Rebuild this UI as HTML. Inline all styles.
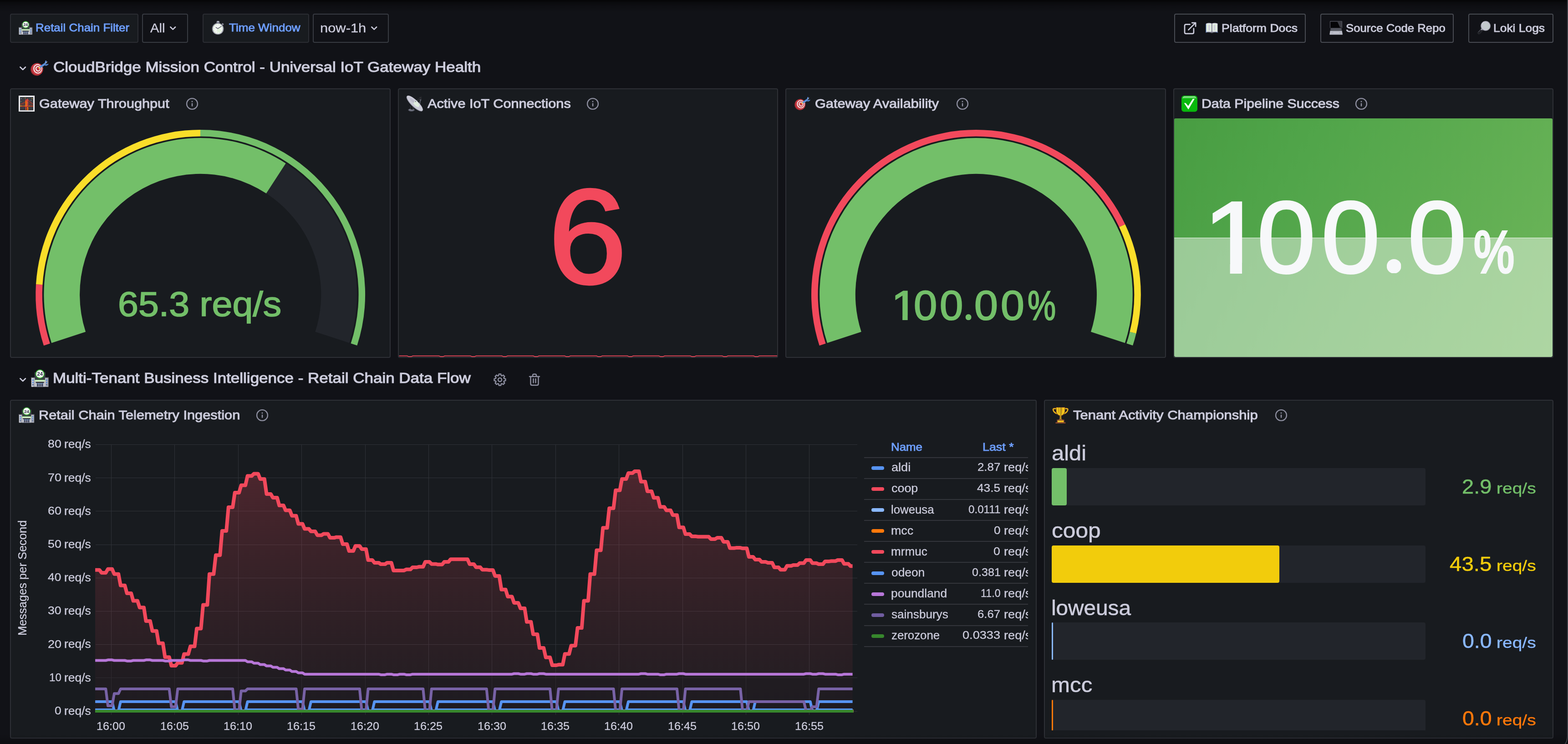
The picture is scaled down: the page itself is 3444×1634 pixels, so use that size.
<!DOCTYPE html><html lang="en"><head><meta charset="utf-8"><title>CloudBridge Mission Control</title><style>
*{box-sizing:border-box}
html,body{margin:0;padding:0;background:#111217;}
body{width:3444px;height:1634px;overflow:hidden;position:relative;font-family:"Liberation Sans",sans-serif;color:#ccccdc;}
#app{will-change:transform;position:absolute;left:0;top:0;width:3444px;height:1634px;overflow:hidden;background:#111217;}
.t{position:absolute;white-space:nowrap;transform-origin:0 50%;display:block;margin:0;padding:0;}
.abs{position:absolute}
.panel{position:absolute;background:#181b1f;border:2px solid #2e3036;border-radius:4px;}
.chip{position:absolute;top:30px;height:64px;border-radius:4px;}
.chip.lbl{background:#181b1f;border:2px solid #2b2d33;}
.chip.val{background:#111217;border:2px solid #383b42;}
.chip.lnk{background:#111217;border:2px solid #484b52;}
svg{position:absolute;overflow:visible}
@media (max-width:1722px) and (min-resolution:2dppx){body{zoom:0.5}}
</style></head><body><div id="app"><nav class="controls"><div class="chip lbl" style="left:22px;width:282px"></div><svg class="emoji" role="img" aria-label="convenience store" style="left:41.2px;top:45.6px" width="30.3" height="30.3" viewBox="0 0 39 39"><rect x="7.7" y="6.6" width="24" height="17" fill="#3b3e47"/><rect x="0.6" y="18.6" width="7.9" height="20" fill="#b4b6c0"/><rect x="30.9" y="18.6" width="7.5" height="20" fill="#b4b6c0"/><rect x="1.6" y="18.6" width="3" height="20" fill="#cfd0d7"/><rect x="35" y="18.6" width="3" height="20" fill="#a2a4ae"/><rect x="-0.2" y="17.6" width="9" height="1.5" fill="#5a5e69"/><rect x="30.4" y="17.6" width="8.6" height="1.5" fill="#5a5e69"/><rect x="3.1" y="22.4" width="2.7" height="3" fill="#4a86d8"/><rect x="3.1" y="27.6" width="2.7" height="3" fill="#4a86d8"/><rect x="3.1" y="32.6" width="2.7" height="2.8" fill="#45608f"/><rect x="33.3" y="22.4" width="2.5" height="3" fill="#4a86d8"/><rect x="33.3" y="27.6" width="2.5" height="3" fill="#4a86d8"/><rect x="33.3" y="32.6" width="2.5" height="2.8" fill="#45608f"/><rect x="8.4" y="23.3" width="22.5" height="4.3" fill="#d6f0cb"/><rect x="8.4" y="22.7" width="22.5" height="0.8" fill="#3aa635"/><rect x="8.4" y="27.6" width="22.5" height="11" fill="#c6c8d0"/><rect x="10.8" y="27.5" width="17.8" height="2.8" fill="#33363f"/><rect x="12.8" y="30.3" width="14" height="8.3" fill="#4b5066"/><rect x="13.4" y="31" width="3.6" height="1.2" fill="#4a86d8"/><rect x="18.3" y="31" width="3.2" height="1.2" fill="#4a86d8"/><rect x="22.8" y="31" width="3.4" height="1.2" fill="#4a86d8"/><rect x="17.1" y="30.3" width="1" height="8.3" fill="#b9bbc4"/><rect x="21.6" y="30.3" width="1" height="8.3" fill="#b9bbc4"/><rect x="8" y="37.8" width="23" height="1" fill="#8d93a6"/><circle cx="19.7" cy="10.4" r="10.1" fill="#36a632"/><circle cx="19.7" cy="10.4" r="8.3" fill="#f6f7f8"/><path d="M12.6 15.6 Q19.7 21 26.8 15.6 Q19.7 17.6 12.6 15.6Z" fill="#d6f0cb"/><text x="19.75" y="14.4" font-family="Liberation Sans,sans-serif" font-weight="700" font-size="11" text-anchor="middle" fill="#2d3142" textLength="12.6" lengthAdjust="spacingAndGlyphs">24</text></svg><span class="t" style="left:78.4px;top:48.6px;font-size:24.5px;line-height:24.5px;color:#6e9fff;transform:scaleX(1.0582);-webkit-text-stroke:0.88px #6e9fff;">Retail Chain Filter</span><div class="chip val" style="left:312px;width:101px"></div><span class="t" style="left:330.2px;top:48.0px;font-size:28px;line-height:28px;color:#ccccdc;transform:scaleX(1.0437);-webkit-text-stroke:0.34px #ccccdc;">All</span><svg style="left:373.3px;top:58.0px" width="13.5" height="8.4" viewBox="0 0 13.5 8.4"><path d="M1.30 1.30 L6.75 6.58 L12.20 1.30" fill="none" stroke="#ccccdc" stroke-width="2.6" stroke-linecap="round" stroke-linejoin="round"/></svg><div class="chip lbl" style="left:445px;width:234px"></div><svg class="emoji" role="img" aria-label="stopwatch" style="left:465.0px;top:45.0px" width="28.0" height="32.0" viewBox="0 0 28 32"><rect x="10.6" y="1" width="6.6" height="5.4" rx="1.6" fill="#7d8090"/><ellipse cx="13.9" cy="2.2" rx="2" ry="1.1" fill="#c9cad3"/><rect x="22.3" y="6.3" width="4" height="3.2" rx="0.9" transform="rotate(40 24.3 7.9)" fill="#8d8f9c"/><circle cx="13.6" cy="18.2" r="12.9" fill="#8b8d99"/><path d="M1.2 21 A12.9 12.9 0 0 0 26 21 A13.5 11 0 0 1 1.2 21Z" fill="#b3b5bf"/><circle cx="13.6" cy="18" r="10.9" fill="#f3f5f4"/><circle cx="13.6" cy="18" r="9" fill="none" stroke="#d5efca" stroke-width="2.6" stroke-dasharray="1.5 3.2"/><circle cx="15.5" cy="21.5" r="4.2" fill="#d5efca" opacity="0.6"/><path d="M9.2 15.1 L13.5 17.9 L21 12.9" stroke="#5a5c6a" stroke-width="1.3" stroke-linecap="round" stroke-linejoin="round" fill="none"/></svg><span class="t" style="left:502.5px;top:48.6px;font-size:24.5px;line-height:24.5px;color:#6e9fff;transform:scaleX(1.0623);-webkit-text-stroke:0.88px #6e9fff;">Time Window</span><div class="chip val" style="left:687px;width:167px"></div><span class="t" style="left:703.3px;top:48.0px;font-size:28px;line-height:28px;color:#ccccdc;transform:scaleX(1.1026);-webkit-text-stroke:0.34px #ccccdc;">now-1h</span><svg style="left:815.0px;top:58.0px" width="13.5" height="8.4" viewBox="0 0 13.5 8.4"><path d="M1.30 1.30 L6.75 6.58 L12.20 1.30" fill="none" stroke="#ccccdc" stroke-width="2.6" stroke-linecap="round" stroke-linejoin="round"/></svg><div class="chip lnk" style="left:2579px;width:289px"></div><svg class="ico" role="img" aria-label="external link" style="left:2600.0px;top:48.0px" width="28.0" height="28.0" viewBox="0 0 28 28"><path d="M13.6 5.7 H5 Q2 5.7 2 8.7 V22.9 Q2 25.9 5 25.9 H18.9 Q21.9 25.9 21.9 22.9 V14.6" fill="none" stroke="#ccccdc" stroke-width="2.7" stroke-linecap="round" stroke-linejoin="round"/><path d="M10.4 17.6 L25.6 2.4 M18.2 2.1 H26.1 V10" fill="none" stroke="#ccccdc" stroke-width="2.7" stroke-linecap="round" stroke-linejoin="round"/></svg><svg class="emoji" role="img" aria-label="open book" style="left:2647.7px;top:49.6px" width="27.4" height="22.6" viewBox="0 0 27.4 22.6"><path d="M0.4 2.6 L1.6 2 V20.4 L0.4 21 Z" fill="#4a86d8"/><path d="M1.2 1.8 Q7 -0.4 13.4 1.4 V20.8 Q7 19 1.2 20.2 Z" fill="#dcdde7"/><path d="M26.4 1.8 Q20.6 -0.4 14.2 1.4 V20.8 Q20.6 19 26.4 20.2 Z" fill="#dcdde7"/><path d="M3 3.4 Q8 2 12 3.2 V18.6 Q8 17.4 3 18.4 Z" fill="#e2f4dc" opacity="0.9"/><path d="M24.6 3.4 Q19.6 2 15.6 3.2 V18.6 Q19.6 17.4 24.6 18.4 Z" fill="#e2f4dc" opacity="0.9"/><path d="M6 5 Q8 4.4 9.8 5 V17 Q8 16.4 6 17 Z" fill="#cfcfdc"/><path d="M17.6 5 Q19.6 4.4 21.6 5 V17 Q19.6 16.4 17.6 17 Z" fill="#cfcfdc"/><path d="M13.8 1.4 V21.2" stroke="#7d7f8c" stroke-width="1.1"/><path d="M0.4 20.6 Q7 19.4 12.6 21 Q13.8 22.4 15 21 Q20.6 19.4 27.2 20.6 V21.4 Q20.6 20.4 15.4 22 Q13.8 23.2 12.2 22 Q7 20.4 0.4 21.4 Z" fill="#8f93a6"/><path d="M0.4 20.7 H4 V21.3 H0.4Z M22.6 20.6 H26.8 V21.2 H22.6Z" fill="#4a86d8"/></svg><span class="t" style="left:2682.6px;top:49.9px;font-size:24px;line-height:24px;color:#ccccdc;transform:scaleX(1.1081);-webkit-text-stroke:0.86px #ccccdc;">Platform Docs</span><div class="chip lnk" style="left:2900px;width:293px"></div><svg class="emoji" role="img" aria-label="laptop" style="left:2919.7px;top:45.7px" width="29.3" height="30.5" viewBox="0 0 29.3 30.5"><path d="M2 0.3 H27 Q28 0.3 28 1.3 V15.4 H1.1 V1.3 Q1.1 0.3 2 0.3Z" fill="#5d5f69"/><rect x="2.1" y="1.5" width="24.8" height="13.9" fill="#050507"/><path d="M17.4 1.5 H26.9 V14 L23.4 14.6 Z" fill="#3b3c43"/><path d="M2.6 15.4 H26.5 L27.6 21.8 H1.5 Z" fill="#494b53"/><path d="M4.6 17 H24.5 M4.2 18.6 H25 M5 20.2 H24.6" stroke="#6a6d78" stroke-width="0.8" stroke-dasharray="1.6 0.9"/><path d="M1.5 21.8 H27.6 L29 29.4 Q29 30.2 28 30.2 H1.2 Q0.3 30.2 0.3 29.4 Z" fill="#b8bac6"/><rect x="7.4" y="23.4" width="14.6" height="4.8" rx="0.5" fill="#c8cad5" stroke="#9d9fac" stroke-width="0.6"/><path d="M8.6 25 H21 M8.6 26.6 H21" stroke="#a9abb8" stroke-width="0.6" stroke-dasharray="1.5 0.8"/></svg><span class="t" style="left:2956.3px;top:49.9px;font-size:24px;line-height:24px;color:#ccccdc;transform:scaleX(1.0717);-webkit-text-stroke:0.86px #ccccdc;">Source Code Repo</span><div class="chip lnk" style="left:3225px;width:187px"></div><svg class="emoji" role="img" aria-label="magnifying glass" style="left:3244.1px;top:46.0px" width="30.0" height="30.0" viewBox="0 0 30 30"><path d="M11.2 18.8 L4.6 26" stroke="#3d3f47" stroke-width="6" stroke-linecap="round"/><path d="M11.2 18.8 L4.6 26" stroke="#1d1e23" stroke-width="5" stroke-linecap="round"/><path d="M9.4 17.8 L3.6 24.2" stroke="#4c4e58" stroke-width="1.2" stroke-linecap="round"/><path d="M12.6 16.2 L9.6 19.6" stroke="#a9abb7" stroke-width="3.4"/><circle cx="19.1" cy="10.9" r="10.9" fill="#8b8d98"/><circle cx="19.1" cy="10.9" r="9.8" fill="#c4c5d0"/><path d="M10.4 8 A9.3 9.3 0 0 1 16 2.2" stroke="#e4e5ec" stroke-width="1" fill="none"/><g fill="#b9ecae"><circle cx="13" cy="6.6" r="0.55"/><circle cx="17.4" cy="5.6" r="0.55"/><circle cx="20.4" cy="5.6" r="0.55"/><circle cx="23.4" cy="6.6" r="0.55"/><circle cx="16.4" cy="7.6" r="0.55"/><circle cx="19.4" cy="8.6" r="0.55"/><circle cx="22.4" cy="8.6" r="0.55"/><circle cx="25.4" cy="9.6" r="0.55"/><circle cx="15.4" cy="10.6" r="0.55"/><circle cx="17.4" cy="10.6" r="0.55"/><circle cx="20.4" cy="11.6" r="0.55"/><circle cx="22.4" cy="12.6" r="0.55"/><circle cx="24.4" cy="12.6" r="0.55"/><circle cx="26.4" cy="11.6" r="0.55"/><circle cx="14.4" cy="13.6" r="0.55"/><circle cx="18.4" cy="13.6" r="0.55"/><circle cx="15.4" cy="15.6" r="0.55"/><circle cx="20.4" cy="15.6" r="0.55"/><circle cx="24.4" cy="16.6" r="0.55"/><circle cx="25.4" cy="14.6" r="0.55"/><circle cx="22.4" cy="17.6" r="0.55"/></g></svg><span class="t" style="left:3280.4px;top:49.9px;font-size:24px;line-height:24px;color:#ccccdc;transform:scaleX(1.1006);-webkit-text-stroke:0.86px #ccccdc;">Loki Logs</span></nav><header class="row"><svg style="left:43.0px;top:145.6px" width="14.3" height="8.8" viewBox="0 0 14.3 8.8"><path d="M1.30 1.30 L7.15 6.98 L13.00 1.30" fill="none" stroke="#ccccdc" stroke-width="2.6" stroke-linecap="round" stroke-linejoin="round"/></svg><svg class="emoji" role="img" aria-label="direct hit" style="left:67.1px;top:131.6px" width="40.0" height="35.0" viewBox="0 0 40 35"><ellipse cx="13.6" cy="20.6" rx="13.4" ry="13.6" transform="rotate(-20 13.6 20.6)" fill="#9c2b30"/><ellipse cx="15" cy="19.6" rx="12.6" ry="13.2" transform="rotate(-20 15 19.6)" fill="#c73a42"/><ellipse cx="15.8" cy="19.2" rx="9.6" ry="10.4" transform="rotate(-20 15.8 19.2)" fill="#f4f1f2"/><ellipse cx="16.1" cy="19.1" rx="7.6" ry="8.4" transform="rotate(-20 16.1 19.1)" fill="#c73a42"/><ellipse cx="16.4" cy="19" rx="5.5" ry="6.2" transform="rotate(-20 16.4 19)" fill="#f4f1f2"/><ellipse cx="16.6" cy="19" rx="3.4" ry="4" transform="rotate(-20 16.6 19)" fill="#c73a42"/><path d="M18 17.6 L22.5 14" stroke="#f5d21f" stroke-width="1.7" stroke-linecap="round"/><path d="M23.2 14.6 L27.6 18" stroke="#c9cad3" stroke-width="0.9"/><path d="M22.6 14.4 L31.5 8.6" stroke="#5a8fd9" stroke-width="4.6" stroke-linecap="round"/><path d="M30 9.4 L33 0.8 L35 1.6 L35.4 6.6 Z" fill="#5a8fd9"/><path d="M30.5 9.6 L39.6 8 L38.8 10.6 L33.4 13 Z" fill="#4f80c8"/><path d="M33.6 6 L37.2 3.4" stroke="#d0d2da" stroke-width="1.1"/><circle cx="33.2" cy="8.6" r="1" fill="#5d6b7c"/></svg><span class="t" style="left:116.8px;top:130.6px;font-size:32px;line-height:32px;color:#ccccdc;transform:scaleX(1.0940);-webkit-text-stroke:1.15px #ccccdc;">CloudBridge Mission Control - Universal IoT Gateway Health</span></header><section class="panel" style="left:22px;top:194px;width:835.5px;height:592px" aria-label="Gateway Throughput"></section><svg class="emoji" role="img" aria-label="bridge at night" style="left:40.8px;top:209.9px" width="35.0" height="35.0" viewBox="0 0 35 35"><rect x="0" y="0" width="35" height="35" fill="#f4f4f8"/><rect x="2.9" y="3" width="29.2" height="29.2" fill="#3b3e43"/><rect x="2.9" y="24.6" width="29.2" height="7.6" fill="#34363b"/><path d="M3.4 26.2H13.5M3.4 28H12M5 30H13.5M22.5 26.2H31.6M23.5 28H31.6M22.5 30H30" stroke="#45484e" stroke-width="0.7"/><circle cx="14.4" cy="5.4" r="0.8" fill="#e6b91e"/><circle cx="29.5" cy="6.4" r="0.8" fill="#e6b91e"/><rect x="5" y="6" width="1.4" height="0.9" fill="#c9cad3"/><rect x="26.4" y="10.2" width="1.6" height="0.9" fill="#c9cad3"/><rect x="4.5" y="12.4" width="0.9" height="1.4" fill="#c9cad3"/><path d="M14.6 13.6 Q9 17.4 3 19.2 M21 9.4 Q26.5 15.4 32 18.6" stroke="#a3392b" stroke-width="1.5" fill="none"/><path d="M5 22.4V19.4M7.6 22.4V18.2M10.2 22.4V17M12.6 22.4V15.6M23 22.4V13M25.4 22.4V15M27.8 22.4V16.8M30 22.4V18.2" stroke="#8f3a2e" stroke-width="0.8"/><rect x="2.9" y="22.3" width="29.2" height="2.3" fill="#a3392b"/><path d="M3 22.5H7M8.2 22.5H9M11 22.5H12M13 22.5H14.6M22.6 22.5H23.6M24.4 22.5H25.4M29 22.5H30" stroke="#e6b91e" stroke-width="1"/><path d="M14.4 9.6 L15.8 7.2 L17 9 L19.4 5.8 L21.2 9 V24.6 H14.4 Z" fill="#c9373f"/><rect x="15.1" y="11.6" width="2.1" height="12.6" fill="#ff7f00"/><path d="M18.6 9.6L19.8 8.6M18.2 12L19.8 10.6M19.4 14V18M19 20L20 21.4M18.4 22L19.6 20.8" stroke="#d9a61e" stroke-width="0.8"/><rect x="14.8" y="24.8" width="2.6" height="6.6" fill="#c9373f"/><rect x="18.4" y="24.8" width="2.6" height="7.2" fill="#ff7f00"/><rect x="17.4" y="25" width="1" height="6" fill="#5a2a2c"/><rect x="15" y="29.4" width="1.2" height="1.4" fill="#ff9d1e"/><rect x="20.6" y="27.6" width="1" height="3.6" fill="#c9373f"/></svg><span class="t" style="left:86.1px;top:213.8px;font-size:28px;line-height:28px;color:#ccccdc;transform:scaleX(1.0945);-webkit-text-stroke:1.01px #ccccdc;">Gateway Throughput</span><svg class="ico-info" style="left:408.2px;top:213.9px" width="28" height="28" viewBox="0 0 28 28"><circle cx="14" cy="14" r="11.9" fill="none" stroke="#8e8fa0" stroke-width="2.4"/><rect x="12.8" y="12.4" width="2.5" height="7.4" rx="1.2" fill="#8e8fa0"/><circle cx="14" cy="9" r="1.5" fill="#8e8fa0"/></svg><section class="panel" style="left:873.5px;top:194px;width:835.5px;height:592px" aria-label="Active IoT Connections"></section><svg class="emoji" role="img" aria-label="satellite antenna" style="left:893.0px;top:209.9px" width="35.0" height="35.0" viewBox="0 0 35 35"><ellipse cx="10.6" cy="31.6" rx="7" ry="3.2" fill="#5c5f6b"/><ellipse cx="10.2" cy="31" rx="4.6" ry="1.6" fill="#7d8090"/><path d="M7 22 L8.5 30.6 L13.5 31 L16 27 Z" fill="#2b2d33"/><path d="M10.4 24 L12 30" stroke="#0b0c0e" stroke-width="1.4"/><path d="M21 12 L25.5 9.6 L31.5 9 L29.5 13.4 L29.2 19" stroke="#6f727f" stroke-width="1.4" fill="none"/><path d="M25.6 9.4 L31.6 3.8" stroke="#222428" stroke-width="4.4" stroke-linecap="round"/><path d="M28.6 3.6 L32.6 6.6" stroke="#3a3c42" stroke-width="1.1"/><ellipse cx="17.6" cy="17.4" rx="7.6" ry="23.6" transform="rotate(-46.5 17.6 17.4)" fill="#8f92a0"/><ellipse cx="18.2" cy="16.8" rx="7.1" ry="23.3" transform="rotate(-46.5 18.2 16.8)" fill="#cacad7"/><ellipse cx="21.6" cy="18.4" rx="4.4" ry="8" transform="rotate(-46.5 21.6 18.4)" fill="#e4f3e0" opacity="0.85"/><ellipse cx="12" cy="10.4" rx="2.6" ry="7" transform="rotate(-46.5 12 10.4)" fill="#bdbdcb"/><path d="M19.8 13 L14.8 17" stroke="#dff0da" stroke-width="0.9"/><circle cx="19.6" cy="13.2" r="0.9" fill="#4a4c55"/></svg><span class="t" style="left:938.8px;top:213.8px;font-size:28px;line-height:28px;color:#ccccdc;transform:scaleX(1.0950);-webkit-text-stroke:1.01px #ccccdc;">Active IoT Connections</span><svg class="ico-info" style="left:1288.0px;top:213.9px" width="28" height="28" viewBox="0 0 28 28"><circle cx="14" cy="14" r="11.9" fill="none" stroke="#8e8fa0" stroke-width="2.4"/><rect x="12.8" y="12.4" width="2.5" height="7.4" rx="1.2" fill="#8e8fa0"/><circle cx="14" cy="9" r="1.5" fill="#8e8fa0"/></svg><section class="panel" style="left:1725px;top:194px;width:835.5px;height:592px" aria-label="Gateway Availability"></section><svg class="emoji" role="img" aria-label="direct hit" style="left:1745.2px;top:211.6px" width="35.0" height="30.6" viewBox="0 0 40 35"><ellipse cx="13.6" cy="20.6" rx="13.4" ry="13.6" transform="rotate(-20 13.6 20.6)" fill="#9c2b30"/><ellipse cx="15" cy="19.6" rx="12.6" ry="13.2" transform="rotate(-20 15 19.6)" fill="#c73a42"/><ellipse cx="15.8" cy="19.2" rx="9.6" ry="10.4" transform="rotate(-20 15.8 19.2)" fill="#f4f1f2"/><ellipse cx="16.1" cy="19.1" rx="7.6" ry="8.4" transform="rotate(-20 16.1 19.1)" fill="#c73a42"/><ellipse cx="16.4" cy="19" rx="5.5" ry="6.2" transform="rotate(-20 16.4 19)" fill="#f4f1f2"/><ellipse cx="16.6" cy="19" rx="3.4" ry="4" transform="rotate(-20 16.6 19)" fill="#c73a42"/><path d="M18 17.6 L22.5 14" stroke="#f5d21f" stroke-width="1.7" stroke-linecap="round"/><path d="M23.2 14.6 L27.6 18" stroke="#c9cad3" stroke-width="0.9"/><path d="M22.6 14.4 L31.5 8.6" stroke="#5a8fd9" stroke-width="4.6" stroke-linecap="round"/><path d="M30 9.4 L33 0.8 L35 1.6 L35.4 6.6 Z" fill="#5a8fd9"/><path d="M30.5 9.6 L39.6 8 L38.8 10.6 L33.4 13 Z" fill="#4f80c8"/><path d="M33.6 6 L37.2 3.4" stroke="#d0d2da" stroke-width="1.1"/><circle cx="33.2" cy="8.6" r="1" fill="#5d6b7c"/></svg><span class="t" style="left:1789.6px;top:213.8px;font-size:28px;line-height:28px;color:#ccccdc;transform:scaleX(1.0947);-webkit-text-stroke:1.01px #ccccdc;">Gateway Availability</span><svg class="ico-info" style="left:2099.7px;top:213.9px" width="28" height="28" viewBox="0 0 28 28"><circle cx="14" cy="14" r="11.9" fill="none" stroke="#8e8fa0" stroke-width="2.4"/><rect x="12.8" y="12.4" width="2.5" height="7.4" rx="1.2" fill="#8e8fa0"/><circle cx="14" cy="9" r="1.5" fill="#8e8fa0"/></svg><section class="panel" style="left:2576.5px;top:194px;width:835.5px;height:592px" aria-label="Data Pipeline Success"></section><svg class="emoji" role="img" aria-label="check mark button" style="left:2594.6px;top:209.9px" width="35.0" height="35.4" viewBox="0 0 34.7 35.1"><rect x="0" y="0" width="34.7" height="35.1" rx="5.6" fill="#09b80d"/><path d="M2.4 5.8 Q3.2 1.8 7 1.6 H27.7 Q31.5 1.8 32.3 5.8 Q31 4.6 27.7 4.4 H7 Q3.7 4.6 2.4 5.8Z" fill="#bfeec0" opacity="0.75"/><path d="M1.6 6.6 Q4 3.6 7 3.6 H27.7 Q30.7 3.6 33.1 6.6 Q30.6 6 27.7 6 H7 Q4.1 6 1.6 6.6Z" fill="#5fd462" opacity="0.8"/><path d="M5.6 16.2 L9.3 16 L14.7 22.6 L24.6 7 L28.7 7 L15.1 30.2 Z" fill="#fbfbfd"/></svg><span class="t" style="left:2638.6px;top:213.8px;font-size:28px;line-height:28px;color:#ccccdc;transform:scaleX(1.0811);-webkit-text-stroke:1.01px #ccccdc;">Data Pipeline Success</span><svg class="ico-info" style="left:2975.9px;top:213.9px" width="28" height="28" viewBox="0 0 28 28"><circle cx="14" cy="14" r="11.9" fill="none" stroke="#8e8fa0" stroke-width="2.4"/><rect x="12.8" y="12.4" width="2.5" height="7.4" rx="1.2" fill="#8e8fa0"/><circle cx="14" cy="9" r="1.5" fill="#8e8fa0"/></svg><svg class="gauge" style="left:0;top:0" width="3444" height="800" viewBox="0 0 3444 800"><path d="M113.23 753.14 A343.8 343.8 0 1 1 767.17 753.14 L692.33 728.82 A265.1 265.1 0 1 0 188.07 728.82 Z" fill="#22252b"/><path d="M113.23 753.14 A343.8 343.8 0 0 1 627.69 358.72 L584.77 424.69 A265.1 265.1 0 0 0 188.07 728.82 Z" fill="#73bf69"/><path d="M96.07 758.91 A361.9 361.9 0 0 1 79.01 624.18 L93.49 625.09 A347.4 347.4 0 0 0 109.86 754.42 Z" fill="#f2495c"/><path d="M79.00 624.36 A361.9 361.9 0 0 1 440.20 285.00 L440.20 299.50 A347.4 347.4 0 0 0 93.47 625.26 Z" fill="#fade2a"/><path d="M440.02 285.00 A361.9 361.9 0 0 1 784.39 758.73 L770.60 754.25 A347.4 347.4 0 0 0 440.03 299.50 Z" fill="#73bf69"/></svg><span class="t" style="left:259.3px;top:629.5px;font-size:76px;line-height:76px;color:#73bf69;transform:scaleX(1.0626);-webkit-text-stroke:1.7px #73bf69;">65.3 req/s</span><svg class="gauge" style="left:0;top:0" width="3444" height="800" viewBox="0 0 3444 800"><path d="M1816.93 753.14 A343.8 343.8 0 1 1 2470.87 753.14 L2396.03 728.82 A265.1 265.1 0 1 0 1891.77 728.82 Z" fill="#22252b"/><path d="M1816.93 753.14 A343.8 343.8 0 1 1 2470.87 753.14 L2396.03 728.82 A265.1 265.1 0 1 0 1891.77 728.82 Z" fill="#73bf69"/><path d="M1799.77 758.91 A361.9 361.9 0 0 1 2471.36 492.81 L2458.24 498.98 A347.4 347.4 0 0 0 1813.56 754.42 Z" fill="#f2495c"/><path d="M2471.28 492.65 A361.9 361.9 0 0 1 2495.53 732.49 L2481.44 729.06 A347.4 347.4 0 0 0 2458.16 498.83 Z" fill="#fade2a"/><path d="M2495.58 732.31 A361.9 361.9 0 0 1 2488.09 758.73 L2474.30 754.25 A347.4 347.4 0 0 0 2481.49 728.89 Z" fill="#73bf69"/></svg><div class="num" style="position:absolute;left:0;top:0"><span class="t" style="left:1957.5px;top:625.9px;font-size:90px;line-height:90px;color:#73bf69;transform:scaleX(1.1264);-webkit-text-stroke:2.2px #73bf69;clip-path:polygon(0 0,0.6em 0,0.6em 0.75em,0.3517em 0.75em,0.3517em 1em,0.2383em 1em,0.2383em 0.75em,0 0.75em)">1</span><span class="t" style="left:2006.7px;top:625.9px;font-size:90px;line-height:90px;color:#73bf69;transform:scaleX(1.0241);-webkit-text-stroke:2.2px #73bf69;">0</span><span class="t" style="left:2063.7px;top:625.9px;font-size:90px;line-height:90px;color:#73bf69;transform:scaleX(1.0241);-webkit-text-stroke:2.2px #73bf69;">0</span><span class="t" style="left:2108.4px;top:598.8px;font-size:123.4px;line-height:123.4px;color:#73bf69;transform:scaleX(1.1146);clip-path:ellipse(0.0485em 0.054em at 0.139em 0.7925em)">.</span><span class="t" style="left:2140.4px;top:625.9px;font-size:90px;line-height:90px;color:#73bf69;transform:scaleX(1.0355);-webkit-text-stroke:2.2px #73bf69;">0</span><span class="t" style="left:2197.9px;top:625.9px;font-size:90px;line-height:90px;color:#73bf69;transform:scaleX(1.0355);-webkit-text-stroke:2.2px #73bf69;">0</span><span class="t" style="left:2257.3px;top:625.9px;font-size:90px;line-height:90px;color:#73bf69;transform:scaleX(0.7764);-webkit-text-stroke:2.2px #73bf69;">%</span></div><span class="t" style="left:1203.8px;top:372.3px;font-size:296px;line-height:296px;color:#f2495c;transform:scaleX(1.0506);-webkit-text-stroke:5px #f2495c;">6</span><svg class="spark" style="left:0;top:0" width="3444" height="800" viewBox="0 0 3444 800"><path d="M876.5 781.6 H894 L898 783.2 H903 L907 781.6 H964 L968 783.2 H973 L977 781.6 H1033 L1037 783.2 H1042 L1046 781.6 H1102 L1106 783.2 H1111 L1115 781.6 H1171 L1175 783.2 H1180 L1184 781.6 H1240 L1244 783.2 H1249 L1253 781.6 H1310 L1314 783.2 H1319 L1323 781.6 H1378 L1382 783.2 H1387 L1391 781.6 H1447 L1451 783.2 H1456 L1460 781.6 H1516 L1520 783.2 H1525 L1529 781.6 H1586 L1590 783.2 H1595 L1599 781.6 H1655 L1659 783.2 H1664 L1668 781.6 H1707" stroke="#f2495c" stroke-width="1.7" fill="none" stroke-linejoin="round"/></svg><div class="abs statbg" style="left:2578.5px;top:260px;width:831.5px;height:524px;border-radius:3px 3px 4px 4px;overflow:hidden;background:linear-gradient(120deg,#489d42 0%,#51a54a 30%,#6eb65a 100%)"><div class="abs" style="left:0;top:262px;width:100%;height:262px;background:rgba(255,255,255,0.44);border-top:1.5px solid rgba(255,255,255,0.8)"></div></div><div class="num" style="position:absolute;left:0;top:0"><span class="t" style="left:2642.0px;top:408.6px;font-size:225px;line-height:225px;color:#f7f8fa;transform:scaleX(1.0976);-webkit-text-stroke:4px #f7f8fa;clip-path:polygon(0 0,0.6em 0,0.6em 0.75em,0.3484em 0.75em,0.3484em 1em,0.2416em 1em,0.2416em 0.75em,0 0.75em)">1</span><span class="t" style="left:2761.4px;top:408.6px;font-size:225px;line-height:225px;color:#f7f8fa;transform:scaleX(1.0263);-webkit-text-stroke:4px #f7f8fa;">0</span><span class="t" style="left:2901.6px;top:408.6px;font-size:225px;line-height:225px;color:#f7f8fa;transform:scaleX(1.0309);-webkit-text-stroke:4px #f7f8fa;">0</span><span class="t" style="left:3015.7px;top:350.8px;font-size:295.3px;line-height:295.3px;color:#f7f8fa;transform:scaleX(1.1146);clip-path:ellipse(0.0485em 0.054em at 0.139em 0.7925em)">.</span><span class="t" style="left:3091.9px;top:408.6px;font-size:225px;line-height:225px;color:#f7f8fa;transform:scaleX(1.0309);-webkit-text-stroke:4px #f7f8fa;">0</span><span class="t" style="left:3237.2px;top:487.9px;font-size:130px;line-height:130px;color:#f7f8fa;transform:scaleX(0.7711);-webkit-text-stroke:5.5px #f7f8fa;">%</span></div><header class="row"><svg style="left:43.0px;top:829.6px" width="14.3" height="8.8" viewBox="0 0 14.3 8.8"><path d="M1.30 1.30 L7.15 6.98 L13.00 1.30" fill="none" stroke="#ccccdc" stroke-width="2.6" stroke-linecap="round" stroke-linejoin="round"/></svg><svg class="emoji" role="img" aria-label="convenience store" style="left:67.5px;top:810.5px" width="39.0" height="39.0" viewBox="0 0 39 39"><rect x="7.7" y="6.6" width="24" height="17" fill="#3b3e47"/><rect x="0.6" y="18.6" width="7.9" height="20" fill="#b4b6c0"/><rect x="30.9" y="18.6" width="7.5" height="20" fill="#b4b6c0"/><rect x="1.6" y="18.6" width="3" height="20" fill="#cfd0d7"/><rect x="35" y="18.6" width="3" height="20" fill="#a2a4ae"/><rect x="-0.2" y="17.6" width="9" height="1.5" fill="#5a5e69"/><rect x="30.4" y="17.6" width="8.6" height="1.5" fill="#5a5e69"/><rect x="3.1" y="22.4" width="2.7" height="3" fill="#4a86d8"/><rect x="3.1" y="27.6" width="2.7" height="3" fill="#4a86d8"/><rect x="3.1" y="32.6" width="2.7" height="2.8" fill="#45608f"/><rect x="33.3" y="22.4" width="2.5" height="3" fill="#4a86d8"/><rect x="33.3" y="27.6" width="2.5" height="3" fill="#4a86d8"/><rect x="33.3" y="32.6" width="2.5" height="2.8" fill="#45608f"/><rect x="8.4" y="23.3" width="22.5" height="4.3" fill="#d6f0cb"/><rect x="8.4" y="22.7" width="22.5" height="0.8" fill="#3aa635"/><rect x="8.4" y="27.6" width="22.5" height="11" fill="#c6c8d0"/><rect x="10.8" y="27.5" width="17.8" height="2.8" fill="#33363f"/><rect x="12.8" y="30.3" width="14" height="8.3" fill="#4b5066"/><rect x="13.4" y="31" width="3.6" height="1.2" fill="#4a86d8"/><rect x="18.3" y="31" width="3.2" height="1.2" fill="#4a86d8"/><rect x="22.8" y="31" width="3.4" height="1.2" fill="#4a86d8"/><rect x="17.1" y="30.3" width="1" height="8.3" fill="#b9bbc4"/><rect x="21.6" y="30.3" width="1" height="8.3" fill="#b9bbc4"/><rect x="8" y="37.8" width="23" height="1" fill="#8d93a6"/><circle cx="19.7" cy="10.4" r="10.1" fill="#36a632"/><circle cx="19.7" cy="10.4" r="8.3" fill="#f6f7f8"/><path d="M12.6 15.6 Q19.7 21 26.8 15.6 Q19.7 17.6 12.6 15.6Z" fill="#d6f0cb"/><text x="19.75" y="14.4" font-family="Liberation Sans,sans-serif" font-weight="700" font-size="11" text-anchor="middle" fill="#2d3142" textLength="12.6" lengthAdjust="spacingAndGlyphs">24</text></svg><span class="t" style="left:115.8px;top:814.4px;font-size:32px;line-height:32px;color:#ccccdc;transform:scaleX(1.0933);-webkit-text-stroke:1.15px #ccccdc;">Multi-Tenant Business Intelligence - Retail Chain Data Flow</span><svg class="ico" role="img" aria-label="row options" style="left:1084.0px;top:820.0px" width="28.0" height="28.0" viewBox="0 0 28 28"><path d="M23.17 11.16 L26.42 11.87 L26.42 16.13 L23.17 16.84 L22.49 18.48 L24.29 21.27 L21.27 24.29 L18.48 22.49 L16.84 23.17 L16.13 26.42 L11.87 26.42 L11.16 23.17 L9.52 22.49 L6.73 24.29 L3.71 21.27 L5.51 18.48 L4.83 16.84 L1.58 16.13 L1.58 11.87 L4.83 11.16 L5.51 9.52 L3.71 6.73 L6.73 3.71 L9.52 5.51 L11.16 4.83 L11.87 1.58 L16.13 1.58 L16.84 4.83 L18.48 5.51 L21.27 3.71 L24.29 6.73 L22.49 9.52 Z" fill="none" stroke="#8e8fa0" stroke-width="2.5" stroke-linejoin="round"/><circle cx="14" cy="14" r="4" fill="none" stroke="#8e8fa0" stroke-width="2.5"/></svg><svg class="ico" role="img" aria-label="delete row" style="left:1161.0px;top:820.0px" width="26.0" height="28.0" viewBox="0 0 26 28"><path d="M2 7 H24" stroke="#8e8fa0" stroke-width="2.5" stroke-linecap="round" fill="none"/><path d="M9 6.5 V4.5 Q9 1.8 11.5 1.8 H14.5 Q17 1.8 17 4.5 V6.5" stroke="#8e8fa0" stroke-width="2.5" fill="none"/><path d="M4.5 7.5 V23 Q4.5 26 7.5 26 H18.5 Q21.5 26 21.5 23 V7.5" stroke="#8e8fa0" stroke-width="2.5" fill="none"/><path d="M10.5 12 V20.5 M15.5 12 V20.5" stroke="#8e8fa0" stroke-width="2.5" stroke-linecap="round" fill="none"/></svg></header><section class="panel" style="left:22px;top:878px;width:2254.7px;height:744px" aria-label="Retail Chain Telemetry Ingestion"></section><svg class="emoji" role="img" aria-label="convenience store" style="left:41.0px;top:893.8px" width="34.6" height="34.6" viewBox="0 0 39 39"><rect x="7.7" y="6.6" width="24" height="17" fill="#3b3e47"/><rect x="0.6" y="18.6" width="7.9" height="20" fill="#b4b6c0"/><rect x="30.9" y="18.6" width="7.5" height="20" fill="#b4b6c0"/><rect x="1.6" y="18.6" width="3" height="20" fill="#cfd0d7"/><rect x="35" y="18.6" width="3" height="20" fill="#a2a4ae"/><rect x="-0.2" y="17.6" width="9" height="1.5" fill="#5a5e69"/><rect x="30.4" y="17.6" width="8.6" height="1.5" fill="#5a5e69"/><rect x="3.1" y="22.4" width="2.7" height="3" fill="#4a86d8"/><rect x="3.1" y="27.6" width="2.7" height="3" fill="#4a86d8"/><rect x="3.1" y="32.6" width="2.7" height="2.8" fill="#45608f"/><rect x="33.3" y="22.4" width="2.5" height="3" fill="#4a86d8"/><rect x="33.3" y="27.6" width="2.5" height="3" fill="#4a86d8"/><rect x="33.3" y="32.6" width="2.5" height="2.8" fill="#45608f"/><rect x="8.4" y="23.3" width="22.5" height="4.3" fill="#d6f0cb"/><rect x="8.4" y="22.7" width="22.5" height="0.8" fill="#3aa635"/><rect x="8.4" y="27.6" width="22.5" height="11" fill="#c6c8d0"/><rect x="10.8" y="27.5" width="17.8" height="2.8" fill="#33363f"/><rect x="12.8" y="30.3" width="14" height="8.3" fill="#4b5066"/><rect x="13.4" y="31" width="3.6" height="1.2" fill="#4a86d8"/><rect x="18.3" y="31" width="3.2" height="1.2" fill="#4a86d8"/><rect x="22.8" y="31" width="3.4" height="1.2" fill="#4a86d8"/><rect x="17.1" y="30.3" width="1" height="8.3" fill="#b9bbc4"/><rect x="21.6" y="30.3" width="1" height="8.3" fill="#b9bbc4"/><rect x="8" y="37.8" width="23" height="1" fill="#8d93a6"/><circle cx="19.7" cy="10.4" r="10.1" fill="#36a632"/><circle cx="19.7" cy="10.4" r="8.3" fill="#f6f7f8"/><path d="M12.6 15.6 Q19.7 21 26.8 15.6 Q19.7 17.6 12.6 15.6Z" fill="#d6f0cb"/><text x="19.75" y="14.4" font-family="Liberation Sans,sans-serif" font-weight="700" font-size="11" text-anchor="middle" fill="#2d3142" textLength="12.6" lengthAdjust="spacingAndGlyphs">24</text></svg><span class="t" style="left:85.1px;top:897.9px;font-size:28px;line-height:28px;color:#ccccdc;transform:scaleX(1.0986);-webkit-text-stroke:1.01px #ccccdc;">Retail Chain Telemetry Ingestion</span><svg class="ico-info" style="left:562.0px;top:898.0px" width="28" height="28" viewBox="0 0 28 28"><circle cx="14" cy="14" r="11.9" fill="none" stroke="#8e8fa0" stroke-width="2.4"/><rect x="12.8" y="12.4" width="2.5" height="7.4" rx="1.2" fill="#8e8fa0"/><circle cx="14" cy="9" r="1.5" fill="#8e8fa0"/></svg><svg class="plot" style="left:0;top:0" width="2276" height="1634" viewBox="0 0 2276 1634"><defs><linearGradient id="gcoop" gradientUnits="userSpaceOnUse" x1="0" y1="1035" x2="0" y2="1562"><stop offset="0" stop-color="#f2495c" stop-opacity="0.24"/><stop offset="0.313" stop-color="#f2495c" stop-opacity="0.165"/><stop offset="0.503" stop-color="#f2495c" stop-opacity="0.125"/><stop offset="0.693" stop-color="#f2495c" stop-opacity="0.09"/><stop offset="0.806" stop-color="#f2495c" stop-opacity="0.072"/><stop offset="1" stop-color="#f2495c" stop-opacity="0.05"/></linearGradient><clipPath id="plotclip"><rect x="205.5" y="970" width="1674" height="595.5"/></clipPath></defs><path d="M210 1562.5 H1883 M210 1488.5 H1883 M210 1415.5 H1883 M210 1342.5 H1883 M210 1269.5 H1883 M210 1196.5 H1883 M210 1122.5 H1883 M210 1049.5 H1883 M210 976.5 H1883 M244.5 976 V1570 M383.5 976 V1570 M523.5 976 V1570 M662.5 976 V1570 M802.5 976 V1570 M941.5 976 V1570 M1080.5 976 V1570 M1220.5 976 V1570 M1359.5 976 V1570 M1499.5 976 V1570 M1638.5 976 V1570 M1777.5 976 V1570" stroke="#2f3238" stroke-width="1" fill="none" shape-rendering="crispEdges"/><g clip-path="url(#plotclip)" fill="none" stroke-width="6" stroke-linejoin="round" stroke-linecap="butt"><path d="M209.1 1251.7 L213.7 1251.7 L218.4 1251.7 L223.0 1257.9 L227.7 1257.9 L232.3 1257.9 L237.0 1249.8 L241.6 1249.8 L246.3 1249.8 L250.9 1260.8 L255.6 1260.8 L260.2 1260.8 L264.9 1285.8 L269.5 1285.8 L274.2 1285.8 L278.8 1303.0 L283.4 1303.0 L288.1 1303.0 L292.7 1319.6 L297.4 1319.6 L302.0 1319.6 L306.7 1334.2 L311.3 1334.2 L316.0 1334.2 L320.6 1364.0 L325.3 1364.0 L329.9 1364.0 L334.6 1385.7 L339.2 1385.7 L343.9 1385.7 L348.5 1412.8 L353.1 1412.8 L357.8 1412.8 L362.4 1443.2 L367.1 1443.2 L371.7 1443.2 L376.4 1462.0 L381.0 1462.0 L385.7 1462.0 L390.3 1455.8 L395.0 1455.8 L399.6 1455.8 L404.3 1436.4 L408.9 1436.4 L413.6 1436.4 L418.2 1419.6 L422.8 1419.6 L427.5 1419.6 L432.1 1380.5 L436.8 1380.5 L441.4 1380.5 L446.1 1328.5 L450.7 1328.5 L455.4 1328.5 L460.0 1260.8 L464.7 1260.8 L469.3 1260.8 L474.0 1219.2 L478.6 1219.2 L483.3 1219.2 L487.9 1166.0 L492.5 1166.0 L497.2 1166.0 L501.8 1114.0 L506.5 1114.0 L511.1 1114.0 L515.8 1081.9 L520.4 1081.9 L525.1 1081.9 L529.7 1065.8 L534.4 1065.8 L539.0 1065.8 L543.7 1045.2 L548.3 1045.2 L553.0 1045.2 L557.6 1040.6 L562.2 1040.6 L566.9 1040.6 L571.5 1052.1 L576.2 1052.1 L580.8 1052.1 L585.5 1084.9 L590.1 1084.9 L594.8 1084.9 L599.4 1092.9 L604.1 1092.9 L608.7 1092.9 L613.4 1110.1 L618.0 1110.1 L622.7 1110.1 L627.3 1120.8 L631.9 1120.8 L636.6 1120.8 L641.2 1132.8 L645.9 1132.8 L650.5 1132.8 L655.2 1150.6 L659.8 1150.6 L664.5 1150.6 L669.1 1161.6 L673.8 1161.6 L678.4 1161.6 L683.1 1167.1 L687.7 1167.1 L692.4 1167.1 L697.0 1175.4 L701.6 1175.4 L706.3 1175.4 L710.9 1172.4 L715.6 1172.4 L720.2 1172.4 L724.9 1181.1 L729.5 1181.1 L734.2 1181.1 L738.8 1179.7 L743.5 1179.7 L748.1 1179.7 L752.8 1195.0 L757.4 1195.0 L762.1 1195.0 L766.7 1210.1 L771.3 1210.1 L776.0 1210.1 L780.6 1199.0 L785.3 1199.0 L789.9 1199.0 L794.6 1205.9 L799.2 1205.9 L803.9 1205.9 L808.5 1230.0 L813.2 1230.0 L817.8 1230.0 L822.5 1235.9 L827.1 1235.9 L831.8 1235.9 L836.4 1239.1 L841.0 1239.1 L845.7 1239.1 L850.3 1235.9 L855.0 1235.9 L859.6 1235.9 L864.3 1252.9 L868.9 1252.9 L873.6 1252.9 L878.2 1252.9 L882.9 1252.9 L887.5 1252.9 L892.2 1250.6 L896.8 1250.6 L901.5 1250.6 L906.1 1246.0 L910.7 1246.0 L915.4 1246.0 L920.0 1244.8 L924.7 1244.8 L929.3 1244.8 L934.0 1234.1 L938.6 1234.1 L943.3 1234.1 L947.9 1238.7 L952.6 1238.7 L957.2 1238.7 L961.9 1239.8 L966.5 1239.8 L971.2 1239.8 L975.8 1234.1 L980.4 1234.1 L985.1 1234.1 L989.7 1228.3 L994.4 1228.3 L999.0 1228.3 L1003.7 1228.3 L1008.3 1228.3 L1013.0 1228.3 L1017.6 1228.3 L1022.3 1228.3 L1026.9 1228.3 L1031.6 1239.1 L1036.2 1239.1 L1040.9 1239.1 L1045.5 1245.8 L1050.1 1245.8 L1054.8 1245.8 L1059.4 1251.3 L1064.1 1251.3 L1068.7 1251.3 L1073.4 1251.9 L1078.0 1251.9 L1082.7 1251.9 L1087.3 1265.0 L1092.0 1265.0 L1096.6 1265.0 L1101.3 1294.8 L1105.9 1294.8 L1110.6 1294.8 L1115.2 1310.2 L1119.8 1310.2 L1124.5 1310.2 L1129.1 1323.9 L1133.8 1323.9 L1138.4 1323.9 L1143.1 1336.0 L1147.7 1336.0 L1152.4 1336.0 L1157.0 1365.8 L1161.7 1365.8 L1166.3 1365.8 L1171.0 1392.9 L1175.6 1392.9 L1180.3 1392.9 L1184.9 1423.1 L1189.5 1423.1 L1194.2 1423.1 L1198.8 1443.8 L1203.5 1443.8 L1208.1 1443.8 L1212.8 1461.0 L1217.4 1461.0 L1222.1 1461.0 L1226.7 1459.8 L1231.4 1459.8 L1236.0 1459.8 L1240.7 1436.2 L1245.3 1436.2 L1250.0 1436.2 L1254.6 1417.9 L1259.2 1417.9 L1263.9 1417.9 L1268.5 1379.1 L1273.2 1379.1 L1277.8 1379.1 L1282.5 1319.5 L1287.1 1319.5 L1291.8 1319.5 L1296.4 1260.8 L1301.1 1260.8 L1305.7 1260.8 L1310.4 1208.5 L1315.0 1208.5 L1319.7 1208.5 L1324.3 1159.3 L1328.9 1159.3 L1333.6 1159.3 L1338.2 1116.3 L1342.9 1116.3 L1347.5 1116.3 L1352.2 1076.8 L1356.8 1076.8 L1361.5 1076.8 L1366.1 1052.1 L1370.8 1052.1 L1375.4 1052.1 L1380.1 1039.0 L1384.7 1039.0 L1389.4 1039.0 L1394.0 1034.9 L1398.6 1034.9 L1403.3 1034.9 L1407.9 1057.8 L1412.6 1057.8 L1417.2 1057.8 L1421.9 1078.9 L1426.5 1078.9 L1431.2 1078.9 L1435.8 1093.3 L1440.5 1093.3 L1445.1 1093.3 L1449.8 1113.3 L1454.4 1113.3 L1459.1 1113.3 L1463.7 1120.8 L1468.3 1120.8 L1473.0 1120.8 L1477.6 1131.2 L1482.3 1131.2 L1486.9 1131.2 L1491.6 1158.2 L1496.2 1158.2 L1500.9 1158.2 L1505.5 1173.1 L1510.2 1173.1 L1514.8 1173.1 L1519.5 1178.1 L1524.1 1178.1 L1528.8 1178.1 L1533.4 1178.8 L1538.0 1178.8 L1542.7 1178.8 L1547.3 1178.8 L1552.0 1178.8 L1556.6 1178.8 L1561.3 1183.9 L1565.9 1183.9 L1570.6 1183.9 L1575.2 1181.1 L1579.9 1181.1 L1584.5 1181.1 L1589.2 1190.0 L1593.8 1190.0 L1598.5 1190.0 L1603.1 1203.8 L1607.7 1203.8 L1612.4 1203.8 L1617.0 1203.1 L1621.7 1203.1 L1626.3 1203.1 L1631.0 1204.3 L1635.6 1204.3 L1640.3 1204.3 L1644.9 1223.1 L1649.6 1223.1 L1654.2 1223.1 L1658.9 1229.0 L1663.5 1229.0 L1668.2 1229.0 L1672.8 1234.1 L1677.4 1234.1 L1682.1 1234.1 L1686.7 1235.9 L1691.4 1235.9 L1696.0 1235.9 L1700.7 1246.0 L1705.3 1246.0 L1710.0 1246.0 L1714.6 1251.3 L1719.3 1251.3 L1723.9 1251.3 L1728.6 1242.8 L1733.2 1242.8 L1737.9 1242.8 L1742.5 1240.9 L1747.1 1240.9 L1751.8 1240.9 L1756.4 1236.8 L1761.1 1236.8 L1765.7 1236.8 L1770.4 1229.9 L1775.0 1229.9 L1779.7 1229.9 L1784.3 1236.8 L1789.0 1236.8 L1793.6 1236.8 L1798.3 1239.1 L1802.9 1239.1 L1807.6 1239.1 L1812.2 1232.9 L1816.8 1232.9 L1821.5 1232.9 L1826.1 1232.2 L1830.8 1232.2 L1835.4 1232.2 L1840.1 1229.9 L1844.7 1229.9 L1849.4 1229.9 L1854.0 1238.2 L1858.7 1238.2 L1863.3 1238.2 L1868.0 1243.2 L1872.6 1243.2 L1872.6 1561.7 L209.1 1561.7 Z" fill="url(#gcoop)" stroke="none"/><path d="M209.1 1450.5 L213.7 1450.5 L218.4 1450.5 L223.0 1450.5 L227.7 1450.5 L232.3 1450.5 L237.0 1449.3 L241.6 1449.3 L246.3 1449.3 L250.9 1450.5 L255.6 1450.5 L260.2 1450.5 L264.9 1450.5 L269.5 1450.5 L274.2 1450.5 L278.8 1451.7 L283.4 1451.7 L288.1 1451.7 L292.7 1450.5 L297.4 1450.5 L302.0 1450.5 L306.7 1450.5 L311.3 1450.5 L316.0 1450.5 L320.6 1449.3 L325.3 1449.3 L329.9 1449.3 L334.6 1450.5 L339.2 1450.5 L343.9 1450.5 L348.5 1450.5 L353.1 1450.5 L357.8 1450.5 L362.4 1451.7 L367.1 1451.7 L371.7 1451.7 L376.4 1450.5 L381.0 1450.5 L385.7 1450.5 L390.3 1450.5 L395.0 1450.5 L399.6 1450.5 L404.3 1449.3 L408.9 1449.3 L413.6 1449.3 L418.2 1450.5 L422.8 1450.5 L427.5 1450.5 L432.1 1450.5 L436.8 1450.5 L441.4 1450.5 L446.1 1451.7 L450.7 1451.7 L455.4 1451.7 L460.0 1450.5 L464.7 1450.5 L469.3 1450.5 L474.0 1450.5 L478.6 1450.5 L483.3 1450.5 L487.9 1450.5 L492.5 1450.5 L497.2 1450.5 L501.8 1450.5 L506.5 1450.5 L511.1 1450.5 L515.8 1450.5 L520.4 1450.5 L525.1 1450.5 L529.7 1450.5 L534.4 1450.5 L539.0 1450.5 L543.7 1453.5 L548.3 1453.5 L553.0 1453.5 L557.6 1456.5 L562.2 1456.5 L566.9 1456.5 L571.5 1459.6 L576.2 1459.6 L580.8 1459.6 L585.5 1462.6 L590.1 1462.6 L594.8 1462.6 L599.4 1465.6 L604.1 1465.6 L608.7 1465.6 L613.4 1468.6 L618.0 1468.6 L622.7 1468.6 L627.3 1471.6 L631.9 1471.6 L636.6 1471.6 L641.2 1474.7 L645.9 1474.7 L650.5 1474.7 L655.2 1477.7 L659.8 1477.7 L664.5 1477.7 L669.1 1480.7 L673.8 1480.7 L678.4 1480.7 L683.1 1480.7 L687.7 1480.7 L692.4 1480.7 L697.0 1480.7 L701.6 1480.7 L706.3 1480.7 L710.9 1480.7 L715.6 1480.7 L720.2 1480.7 L724.9 1480.7 L729.5 1480.7 L734.2 1480.7 L738.8 1480.7 L743.5 1480.7 L748.1 1480.7 L752.8 1480.7 L757.4 1480.7 L762.1 1480.7 L766.7 1480.7 L771.3 1480.7 L776.0 1480.7 L780.6 1480.7 L785.3 1480.7 L789.9 1480.7 L794.6 1480.7 L799.2 1480.7 L803.9 1480.7 L808.5 1480.7 L813.2 1480.7 L817.8 1480.7 L822.5 1480.7 L827.1 1480.7 L831.8 1480.7 L836.4 1481.9 L841.0 1481.9 L845.7 1481.9 L850.3 1480.7 L855.0 1480.7 L859.6 1480.7 L864.3 1481.9 L868.9 1481.9 L873.6 1481.9 L878.2 1480.7 L882.9 1480.7 L887.5 1480.7 L892.2 1481.9 L896.8 1481.9 L901.5 1481.9 L906.1 1480.7 L910.7 1480.7 L915.4 1480.7 L920.0 1480.7 L924.7 1480.7 L929.3 1480.7 L934.0 1480.7 L938.6 1480.7 L943.3 1480.7 L947.9 1480.7 L952.6 1480.7 L957.2 1480.7 L961.9 1480.7 L966.5 1480.7 L971.2 1480.7 L975.8 1480.7 L980.4 1480.7 L985.1 1480.7 L989.7 1480.7 L994.4 1480.7 L999.0 1480.7 L1003.7 1480.7 L1008.3 1480.7 L1013.0 1480.7 L1017.6 1480.7 L1022.3 1480.7 L1026.9 1480.7 L1031.6 1480.7 L1036.2 1480.7 L1040.9 1480.7 L1045.5 1480.7 L1050.1 1480.7 L1054.8 1480.7 L1059.4 1480.7 L1064.1 1480.7 L1068.7 1480.7 L1073.4 1480.7 L1078.0 1480.7 L1082.7 1480.7 L1087.3 1480.7 L1092.0 1480.7 L1096.6 1480.7 L1101.3 1480.7 L1105.9 1480.7 L1110.6 1480.7 L1115.2 1480.7 L1119.8 1480.7 L1124.5 1480.7 L1129.1 1479.5 L1133.8 1479.5 L1138.4 1479.5 L1143.1 1480.7 L1147.7 1480.7 L1152.4 1480.7 L1157.0 1479.5 L1161.7 1479.5 L1166.3 1479.5 L1171.0 1480.7 L1175.6 1480.7 L1180.3 1480.7 L1184.9 1479.5 L1189.5 1479.5 L1194.2 1479.5 L1198.8 1480.7 L1203.5 1480.7 L1208.1 1480.7 L1212.8 1480.7 L1217.4 1480.7 L1222.1 1480.7 L1226.7 1480.7 L1231.4 1480.7 L1236.0 1480.7 L1240.7 1480.7 L1245.3 1480.7 L1250.0 1480.7 L1254.6 1480.7 L1259.2 1480.7 L1263.9 1480.7 L1268.5 1480.7 L1273.2 1480.7 L1277.8 1480.7 L1282.5 1480.7 L1287.1 1480.7 L1291.8 1480.7 L1296.4 1480.7 L1301.1 1480.7 L1305.7 1480.7 L1310.4 1480.7 L1315.0 1480.7 L1319.7 1480.7 L1324.3 1480.7 L1328.9 1480.7 L1333.6 1480.7 L1338.2 1480.7 L1342.9 1480.7 L1347.5 1480.7 L1352.2 1480.7 L1356.8 1480.7 L1361.5 1480.7 L1366.1 1480.7 L1370.8 1480.7 L1375.4 1480.7 L1380.1 1480.7 L1384.7 1480.7 L1389.4 1480.7 L1394.0 1480.7 L1398.6 1480.7 L1403.3 1480.7 L1407.9 1479.5 L1412.6 1479.5 L1417.2 1479.5 L1421.9 1480.7 L1426.5 1480.7 L1431.2 1480.7 L1435.8 1480.7 L1440.5 1480.7 L1445.1 1480.7 L1449.8 1481.9 L1454.4 1481.9 L1459.1 1481.9 L1463.7 1480.7 L1468.3 1480.7 L1473.0 1480.7 L1477.6 1480.7 L1482.3 1480.7 L1486.9 1480.7 L1491.6 1479.5 L1496.2 1479.5 L1500.9 1479.5 L1505.5 1480.7 L1510.2 1480.7 L1514.8 1480.7 L1519.5 1480.7 L1524.1 1480.7 L1528.8 1480.7 L1533.4 1480.7 L1538.0 1480.7 L1542.7 1480.7 L1547.3 1480.7 L1552.0 1480.7 L1556.6 1480.7 L1561.3 1480.7 L1565.9 1480.7 L1570.6 1480.7 L1575.2 1480.7 L1579.9 1480.7 L1584.5 1480.7 L1589.2 1480.7 L1593.8 1480.7 L1598.5 1480.7 L1603.1 1480.7 L1607.7 1480.7 L1612.4 1480.7 L1617.0 1480.7 L1621.7 1480.7 L1626.3 1480.7 L1631.0 1480.7 L1635.6 1480.7 L1640.3 1480.7 L1644.9 1480.7 L1649.6 1480.7 L1654.2 1480.7 L1658.9 1480.7 L1663.5 1480.7 L1668.2 1480.7 L1672.8 1480.7 L1677.4 1480.7 L1682.1 1480.7 L1686.7 1480.7 L1691.4 1480.7 L1696.0 1480.7 L1700.7 1480.7 L1705.3 1480.7 L1710.0 1480.7 L1714.6 1480.7 L1719.3 1480.7 L1723.9 1480.7 L1728.6 1480.7 L1733.2 1480.7 L1737.9 1480.7 L1742.5 1480.7 L1747.1 1480.7 L1751.8 1480.7 L1756.4 1480.7 L1761.1 1480.7 L1765.7 1480.7 L1770.4 1479.5 L1775.0 1479.5 L1779.7 1479.5 L1784.3 1480.7 L1789.0 1480.7 L1793.6 1480.7 L1798.3 1479.5 L1802.9 1479.5 L1807.6 1479.5 L1812.2 1480.7 L1816.8 1480.7 L1821.5 1480.7 L1826.1 1480.7 L1830.8 1480.7 L1835.4 1480.7 L1840.1 1481.9 L1844.7 1481.9 L1849.4 1481.9 L1854.0 1480.7 L1858.7 1480.7 L1863.3 1480.7 L1868.0 1480.7 L1872.6 1480.7 L1872.6 1561.7 L209.1 1561.7 Z" fill="#181b20" fill-opacity="0.35" stroke="none"/><path d="M209.1 1540.9 L213.7 1540.9 L218.4 1540.9 L223.0 1540.9 L227.7 1540.9 L232.3 1540.9 L237.0 1540.9 L241.6 1540.9 L246.3 1540.9 L250.9 1561.2 L255.6 1561.2 L260.2 1561.2 L264.9 1540.9 L269.5 1540.9 L274.2 1540.9 L278.8 1540.9 L283.4 1540.9 L288.1 1540.9 L292.7 1540.9 L297.4 1540.9 L302.0 1540.9 L306.7 1540.9 L311.3 1540.9 L316.0 1540.9 L320.6 1540.9 L325.3 1540.9 L329.9 1540.9 L334.6 1540.9 L339.2 1540.9 L343.9 1540.9 L348.5 1540.9 L353.1 1540.9 L357.8 1540.9 L362.4 1540.9 L367.1 1540.9 L371.7 1540.9 L376.4 1540.9 L381.0 1540.9 L385.7 1540.9 L390.3 1561.2 L395.0 1561.2 L399.6 1561.2 L404.3 1540.9 L408.9 1540.9 L413.6 1540.9 L418.2 1540.9 L422.8 1540.9 L427.5 1540.9 L432.1 1540.9 L436.8 1540.9 L441.4 1540.9 L446.1 1540.9 L450.7 1540.9 L455.4 1540.9 L460.0 1540.9 L464.7 1540.9 L469.3 1540.9 L474.0 1540.9 L478.6 1540.9 L483.3 1540.9 L487.9 1540.9 L492.5 1540.9 L497.2 1540.9 L501.8 1540.9 L506.5 1540.9 L511.1 1540.9 L515.8 1540.9 L520.4 1540.9 L525.1 1540.9 L529.7 1561.2 L534.4 1561.2 L539.0 1561.2 L543.7 1540.9 L548.3 1540.9 L553.0 1540.9 L557.6 1540.9 L562.2 1540.9 L566.9 1540.9 L571.5 1540.9 L576.2 1540.9 L580.8 1540.9 L585.5 1540.9 L590.1 1540.9 L594.8 1540.9 L599.4 1540.9 L604.1 1540.9 L608.7 1540.9 L613.4 1540.9 L618.0 1540.9 L622.7 1540.9 L627.3 1540.9 L631.9 1540.9 L636.6 1540.9 L641.2 1540.9 L645.9 1540.9 L650.5 1540.9 L655.2 1540.9 L659.8 1540.9 L664.5 1540.9 L669.1 1561.2 L673.8 1561.2 L678.4 1561.2 L683.1 1540.9 L687.7 1540.9 L692.4 1540.9 L697.0 1540.9 L701.6 1540.9 L706.3 1540.9 L710.9 1540.9 L715.6 1540.9 L720.2 1540.9 L724.9 1540.9 L729.5 1540.9 L734.2 1540.9 L738.8 1540.9 L743.5 1540.9 L748.1 1540.9 L752.8 1540.9 L757.4 1540.9 L762.1 1540.9 L766.7 1540.9 L771.3 1540.9 L776.0 1540.9 L780.6 1540.9 L785.3 1540.9 L789.9 1540.9 L794.6 1540.9 L799.2 1540.9 L803.9 1540.9 L808.5 1561.2 L813.2 1561.2 L817.8 1561.2 L822.5 1540.9 L827.1 1540.9 L831.8 1540.9 L836.4 1540.9 L841.0 1540.9 L845.7 1540.9 L850.3 1540.9 L855.0 1540.9 L859.6 1540.9 L864.3 1540.9 L868.9 1540.9 L873.6 1540.9 L878.2 1540.9 L882.9 1540.9 L887.5 1540.9 L892.2 1540.9 L896.8 1540.9 L901.5 1540.9 L906.1 1540.9 L910.7 1540.9 L915.4 1540.9 L920.0 1540.9 L924.7 1540.9 L929.3 1540.9 L934.0 1540.9 L938.6 1540.9 L943.3 1540.9 L947.9 1561.2 L952.6 1561.2 L957.2 1561.2 L961.9 1540.9 L966.5 1540.9 L971.2 1540.9 L975.8 1540.9 L980.4 1540.9 L985.1 1540.9 L989.7 1540.9 L994.4 1540.9 L999.0 1540.9 L1003.7 1540.9 L1008.3 1540.9 L1013.0 1540.9 L1017.6 1540.9 L1022.3 1540.9 L1026.9 1540.9 L1031.6 1540.9 L1036.2 1540.9 L1040.9 1540.9 L1045.5 1540.9 L1050.1 1540.9 L1054.8 1540.9 L1059.4 1540.9 L1064.1 1540.9 L1068.7 1540.9 L1073.4 1540.9 L1078.0 1540.9 L1082.7 1540.9 L1087.3 1561.2 L1092.0 1561.2 L1096.6 1561.2 L1101.3 1540.9 L1105.9 1540.9 L1110.6 1540.9 L1115.2 1540.9 L1119.8 1540.9 L1124.5 1540.9 L1129.1 1540.9 L1133.8 1540.9 L1138.4 1540.9 L1143.1 1540.9 L1147.7 1540.9 L1152.4 1540.9 L1157.0 1540.9 L1161.7 1540.9 L1166.3 1540.9 L1171.0 1540.9 L1175.6 1540.9 L1180.3 1540.9 L1184.9 1540.9 L1189.5 1540.9 L1194.2 1540.9 L1198.8 1540.9 L1203.5 1540.9 L1208.1 1540.9 L1212.8 1540.9 L1217.4 1540.9 L1222.1 1540.9 L1226.7 1561.2 L1231.4 1561.2 L1236.0 1561.2 L1240.7 1540.9 L1245.3 1540.9 L1250.0 1540.9 L1254.6 1540.9 L1259.2 1540.9 L1263.9 1540.9 L1268.5 1540.9 L1273.2 1540.9 L1277.8 1540.9 L1282.5 1540.9 L1287.1 1540.9 L1291.8 1540.9 L1296.4 1540.9 L1301.1 1540.9 L1305.7 1540.9 L1310.4 1540.9 L1315.0 1540.9 L1319.7 1540.9 L1324.3 1540.9 L1328.9 1540.9 L1333.6 1540.9 L1338.2 1540.9 L1342.9 1540.9 L1347.5 1540.9 L1352.2 1540.9 L1356.8 1540.9 L1361.5 1540.9 L1366.1 1561.2 L1370.8 1561.2 L1375.4 1561.2 L1380.1 1540.9 L1384.7 1540.9 L1389.4 1540.9 L1394.0 1540.9 L1398.6 1540.9 L1403.3 1540.9 L1407.9 1540.9 L1412.6 1540.9 L1417.2 1540.9 L1421.9 1540.9 L1426.5 1540.9 L1431.2 1540.9 L1435.8 1540.9 L1440.5 1540.9 L1445.1 1540.9 L1449.8 1540.9 L1454.4 1540.9 L1459.1 1540.9 L1463.7 1540.9 L1468.3 1540.9 L1473.0 1540.9 L1477.6 1540.9 L1482.3 1540.9 L1486.9 1540.9 L1491.6 1540.9 L1496.2 1540.9 L1500.9 1540.9 L1505.5 1561.2 L1510.2 1561.2 L1514.8 1561.2 L1519.5 1540.9 L1524.1 1540.9 L1528.8 1540.9 L1533.4 1540.9 L1538.0 1540.9 L1542.7 1540.9 L1547.3 1540.9 L1552.0 1540.9 L1556.6 1540.9 L1561.3 1540.9 L1565.9 1540.9 L1570.6 1540.9 L1575.2 1540.9 L1579.9 1540.9 L1584.5 1540.9 L1589.2 1540.9 L1593.8 1540.9 L1598.5 1540.9 L1603.1 1540.9 L1607.7 1540.9 L1612.4 1540.9 L1617.0 1540.9 L1621.7 1540.9 L1626.3 1540.9 L1631.0 1540.9 L1635.6 1540.9 L1640.3 1540.9 L1644.9 1561.2 L1649.6 1561.2 L1654.2 1561.2 L1658.9 1540.9 L1663.5 1540.9 L1668.2 1540.9 L1672.8 1540.9 L1677.4 1540.9 L1682.1 1540.9 L1686.7 1540.9 L1691.4 1540.9 L1696.0 1540.9 L1700.7 1540.9 L1705.3 1540.9 L1710.0 1540.9 L1714.6 1540.9 L1719.3 1540.9 L1723.9 1540.9 L1728.6 1540.9 L1733.2 1540.9 L1737.9 1540.9 L1742.5 1540.9 L1747.1 1540.9 L1751.8 1540.9 L1756.4 1540.9 L1761.1 1540.9 L1765.7 1540.9 L1770.4 1540.9 L1775.0 1540.9 L1779.7 1540.9 L1784.3 1561.2 L1789.0 1561.2 L1793.6 1561.2 L1798.3 1540.9 L1802.9 1540.9 L1807.6 1540.9 L1812.2 1540.9 L1816.8 1540.9 L1821.5 1540.9 L1826.1 1540.9 L1830.8 1540.9 L1835.4 1540.9 L1840.1 1540.9 L1844.7 1540.9 L1849.4 1540.9 L1854.0 1540.9 L1858.7 1540.9 L1863.3 1540.9 L1868.0 1540.9 L1872.6 1540.9" stroke="#5794f2"/><path d="M209.1 1251.7 L213.7 1251.7 L218.4 1251.7 L223.0 1257.9 L227.7 1257.9 L232.3 1257.9 L237.0 1249.8 L241.6 1249.8 L246.3 1249.8 L250.9 1260.8 L255.6 1260.8 L260.2 1260.8 L264.9 1285.8 L269.5 1285.8 L274.2 1285.8 L278.8 1303.0 L283.4 1303.0 L288.1 1303.0 L292.7 1319.6 L297.4 1319.6 L302.0 1319.6 L306.7 1334.2 L311.3 1334.2 L316.0 1334.2 L320.6 1364.0 L325.3 1364.0 L329.9 1364.0 L334.6 1385.7 L339.2 1385.7 L343.9 1385.7 L348.5 1412.8 L353.1 1412.8 L357.8 1412.8 L362.4 1443.2 L367.1 1443.2 L371.7 1443.2 L376.4 1462.0 L381.0 1462.0 L385.7 1462.0 L390.3 1455.8 L395.0 1455.8 L399.6 1455.8 L404.3 1436.4 L408.9 1436.4 L413.6 1436.4 L418.2 1419.6 L422.8 1419.6 L427.5 1419.6 L432.1 1380.5 L436.8 1380.5 L441.4 1380.5 L446.1 1328.5 L450.7 1328.5 L455.4 1328.5 L460.0 1260.8 L464.7 1260.8 L469.3 1260.8 L474.0 1219.2 L478.6 1219.2 L483.3 1219.2 L487.9 1166.0 L492.5 1166.0 L497.2 1166.0 L501.8 1114.0 L506.5 1114.0 L511.1 1114.0 L515.8 1081.9 L520.4 1081.9 L525.1 1081.9 L529.7 1065.8 L534.4 1065.8 L539.0 1065.8 L543.7 1045.2 L548.3 1045.2 L553.0 1045.2 L557.6 1040.6 L562.2 1040.6 L566.9 1040.6 L571.5 1052.1 L576.2 1052.1 L580.8 1052.1 L585.5 1084.9 L590.1 1084.9 L594.8 1084.9 L599.4 1092.9 L604.1 1092.9 L608.7 1092.9 L613.4 1110.1 L618.0 1110.1 L622.7 1110.1 L627.3 1120.8 L631.9 1120.8 L636.6 1120.8 L641.2 1132.8 L645.9 1132.8 L650.5 1132.8 L655.2 1150.6 L659.8 1150.6 L664.5 1150.6 L669.1 1161.6 L673.8 1161.6 L678.4 1161.6 L683.1 1167.1 L687.7 1167.1 L692.4 1167.1 L697.0 1175.4 L701.6 1175.4 L706.3 1175.4 L710.9 1172.4 L715.6 1172.4 L720.2 1172.4 L724.9 1181.1 L729.5 1181.1 L734.2 1181.1 L738.8 1179.7 L743.5 1179.7 L748.1 1179.7 L752.8 1195.0 L757.4 1195.0 L762.1 1195.0 L766.7 1210.1 L771.3 1210.1 L776.0 1210.1 L780.6 1199.0 L785.3 1199.0 L789.9 1199.0 L794.6 1205.9 L799.2 1205.9 L803.9 1205.9 L808.5 1230.0 L813.2 1230.0 L817.8 1230.0 L822.5 1235.9 L827.1 1235.9 L831.8 1235.9 L836.4 1239.1 L841.0 1239.1 L845.7 1239.1 L850.3 1235.9 L855.0 1235.9 L859.6 1235.9 L864.3 1252.9 L868.9 1252.9 L873.6 1252.9 L878.2 1252.9 L882.9 1252.9 L887.5 1252.9 L892.2 1250.6 L896.8 1250.6 L901.5 1250.6 L906.1 1246.0 L910.7 1246.0 L915.4 1246.0 L920.0 1244.8 L924.7 1244.8 L929.3 1244.8 L934.0 1234.1 L938.6 1234.1 L943.3 1234.1 L947.9 1238.7 L952.6 1238.7 L957.2 1238.7 L961.9 1239.8 L966.5 1239.8 L971.2 1239.8 L975.8 1234.1 L980.4 1234.1 L985.1 1234.1 L989.7 1228.3 L994.4 1228.3 L999.0 1228.3 L1003.7 1228.3 L1008.3 1228.3 L1013.0 1228.3 L1017.6 1228.3 L1022.3 1228.3 L1026.9 1228.3 L1031.6 1239.1 L1036.2 1239.1 L1040.9 1239.1 L1045.5 1245.8 L1050.1 1245.8 L1054.8 1245.8 L1059.4 1251.3 L1064.1 1251.3 L1068.7 1251.3 L1073.4 1251.9 L1078.0 1251.9 L1082.7 1251.9 L1087.3 1265.0 L1092.0 1265.0 L1096.6 1265.0 L1101.3 1294.8 L1105.9 1294.8 L1110.6 1294.8 L1115.2 1310.2 L1119.8 1310.2 L1124.5 1310.2 L1129.1 1323.9 L1133.8 1323.9 L1138.4 1323.9 L1143.1 1336.0 L1147.7 1336.0 L1152.4 1336.0 L1157.0 1365.8 L1161.7 1365.8 L1166.3 1365.8 L1171.0 1392.9 L1175.6 1392.9 L1180.3 1392.9 L1184.9 1423.1 L1189.5 1423.1 L1194.2 1423.1 L1198.8 1443.8 L1203.5 1443.8 L1208.1 1443.8 L1212.8 1461.0 L1217.4 1461.0 L1222.1 1461.0 L1226.7 1459.8 L1231.4 1459.8 L1236.0 1459.8 L1240.7 1436.2 L1245.3 1436.2 L1250.0 1436.2 L1254.6 1417.9 L1259.2 1417.9 L1263.9 1417.9 L1268.5 1379.1 L1273.2 1379.1 L1277.8 1379.1 L1282.5 1319.5 L1287.1 1319.5 L1291.8 1319.5 L1296.4 1260.8 L1301.1 1260.8 L1305.7 1260.8 L1310.4 1208.5 L1315.0 1208.5 L1319.7 1208.5 L1324.3 1159.3 L1328.9 1159.3 L1333.6 1159.3 L1338.2 1116.3 L1342.9 1116.3 L1347.5 1116.3 L1352.2 1076.8 L1356.8 1076.8 L1361.5 1076.8 L1366.1 1052.1 L1370.8 1052.1 L1375.4 1052.1 L1380.1 1039.0 L1384.7 1039.0 L1389.4 1039.0 L1394.0 1034.9 L1398.6 1034.9 L1403.3 1034.9 L1407.9 1057.8 L1412.6 1057.8 L1417.2 1057.8 L1421.9 1078.9 L1426.5 1078.9 L1431.2 1078.9 L1435.8 1093.3 L1440.5 1093.3 L1445.1 1093.3 L1449.8 1113.3 L1454.4 1113.3 L1459.1 1113.3 L1463.7 1120.8 L1468.3 1120.8 L1473.0 1120.8 L1477.6 1131.2 L1482.3 1131.2 L1486.9 1131.2 L1491.6 1158.2 L1496.2 1158.2 L1500.9 1158.2 L1505.5 1173.1 L1510.2 1173.1 L1514.8 1173.1 L1519.5 1178.1 L1524.1 1178.1 L1528.8 1178.1 L1533.4 1178.8 L1538.0 1178.8 L1542.7 1178.8 L1547.3 1178.8 L1552.0 1178.8 L1556.6 1178.8 L1561.3 1183.9 L1565.9 1183.9 L1570.6 1183.9 L1575.2 1181.1 L1579.9 1181.1 L1584.5 1181.1 L1589.2 1190.0 L1593.8 1190.0 L1598.5 1190.0 L1603.1 1203.8 L1607.7 1203.8 L1612.4 1203.8 L1617.0 1203.1 L1621.7 1203.1 L1626.3 1203.1 L1631.0 1204.3 L1635.6 1204.3 L1640.3 1204.3 L1644.9 1223.1 L1649.6 1223.1 L1654.2 1223.1 L1658.9 1229.0 L1663.5 1229.0 L1668.2 1229.0 L1672.8 1234.1 L1677.4 1234.1 L1682.1 1234.1 L1686.7 1235.9 L1691.4 1235.9 L1696.0 1235.9 L1700.7 1246.0 L1705.3 1246.0 L1710.0 1246.0 L1714.6 1251.3 L1719.3 1251.3 L1723.9 1251.3 L1728.6 1242.8 L1733.2 1242.8 L1737.9 1242.8 L1742.5 1240.9 L1747.1 1240.9 L1751.8 1240.9 L1756.4 1236.8 L1761.1 1236.8 L1765.7 1236.8 L1770.4 1229.9 L1775.0 1229.9 L1779.7 1229.9 L1784.3 1236.8 L1789.0 1236.8 L1793.6 1236.8 L1798.3 1239.1 L1802.9 1239.1 L1807.6 1239.1 L1812.2 1232.9 L1816.8 1232.9 L1821.5 1232.9 L1826.1 1232.2 L1830.8 1232.2 L1835.4 1232.2 L1840.1 1229.9 L1844.7 1229.9 L1849.4 1229.9 L1854.0 1238.2 L1858.7 1238.2 L1863.3 1238.2 L1868.0 1243.2 L1872.6 1243.2" stroke="#f2495c" stroke-width="8"/><path d="M209.1 1561.6 L1874.5 1561.6" stroke="#8ab8ff"/><path d="M209.1 1561.7 L1874.5 1561.7" stroke="#ff780a"/><path d="M209.1 1561.7 L1874.5 1561.7" stroke="#f2495c"/><path d="M209.1 1558.9 L213.7 1558.9 L218.4 1558.9 L223.0 1558.9 L227.7 1558.9 L232.3 1558.9 L237.0 1558.9 L241.6 1558.9 L246.3 1558.9 L250.9 1561.5 L255.6 1561.5 L260.2 1561.5 L264.9 1558.9 L269.5 1558.9 L274.2 1558.9 L278.8 1558.9 L283.4 1558.9 L288.1 1558.9 L292.7 1558.9 L297.4 1558.9 L302.0 1558.9 L306.7 1558.9 L311.3 1558.9 L316.0 1558.9 L320.6 1558.9 L325.3 1558.9 L329.9 1558.9 L334.6 1558.9 L339.2 1558.9 L343.9 1558.9 L348.5 1558.9 L353.1 1558.9 L357.8 1558.9 L362.4 1558.9 L367.1 1558.9 L371.7 1558.9 L376.4 1558.9 L381.0 1558.9 L385.7 1558.9 L390.3 1561.5 L395.0 1561.5 L399.6 1561.5 L404.3 1558.9 L408.9 1558.9 L413.6 1558.9 L418.2 1558.9 L422.8 1558.9 L427.5 1558.9 L432.1 1558.9 L436.8 1558.9 L441.4 1558.9 L446.1 1558.9 L450.7 1558.9 L455.4 1558.9 L460.0 1558.9 L464.7 1558.9 L469.3 1558.9 L474.0 1558.9 L478.6 1558.9 L483.3 1558.9 L487.9 1558.9 L492.5 1558.9 L497.2 1558.9 L501.8 1558.9 L506.5 1558.9 L511.1 1558.9 L515.8 1558.9 L520.4 1558.9 L525.1 1558.9 L529.7 1561.5 L534.4 1561.5 L539.0 1561.5 L543.7 1558.9 L548.3 1558.9 L553.0 1558.9 L557.6 1558.9 L562.2 1558.9 L566.9 1558.9 L571.5 1558.9 L576.2 1558.9 L580.8 1558.9 L585.5 1558.9 L590.1 1558.9 L594.8 1558.9 L599.4 1558.9 L604.1 1558.9 L608.7 1558.9 L613.4 1558.9 L618.0 1558.9 L622.7 1558.9 L627.3 1558.9 L631.9 1558.9 L636.6 1558.9 L641.2 1558.9 L645.9 1558.9 L650.5 1558.9 L655.2 1558.9 L659.8 1558.9 L664.5 1558.9 L669.1 1561.5 L673.8 1561.5 L678.4 1561.5 L683.1 1558.9 L687.7 1558.9 L692.4 1558.9 L697.0 1558.9 L701.6 1558.9 L706.3 1558.9 L710.9 1558.9 L715.6 1558.9 L720.2 1558.9 L724.9 1558.9 L729.5 1558.9 L734.2 1558.9 L738.8 1558.9 L743.5 1558.9 L748.1 1558.9 L752.8 1558.9 L757.4 1558.9 L762.1 1558.9 L766.7 1558.9 L771.3 1558.9 L776.0 1558.9 L780.6 1558.9 L785.3 1558.9 L789.9 1558.9 L794.6 1558.9 L799.2 1558.9 L803.9 1558.9 L808.5 1561.5 L813.2 1561.5 L817.8 1561.5 L822.5 1558.9 L827.1 1558.9 L831.8 1558.9 L836.4 1558.9 L841.0 1558.9 L845.7 1558.9 L850.3 1558.9 L855.0 1558.9 L859.6 1558.9 L864.3 1558.9 L868.9 1558.9 L873.6 1558.9 L878.2 1558.9 L882.9 1558.9 L887.5 1558.9 L892.2 1558.9 L896.8 1558.9 L901.5 1558.9 L906.1 1558.9 L910.7 1558.9 L915.4 1558.9 L920.0 1558.9 L924.7 1558.9 L929.3 1558.9 L934.0 1558.9 L938.6 1558.9 L943.3 1558.9 L947.9 1561.5 L952.6 1561.5 L957.2 1561.5 L961.9 1558.9 L966.5 1558.9 L971.2 1558.9 L975.8 1558.9 L980.4 1558.9 L985.1 1558.9 L989.7 1558.9 L994.4 1558.9 L999.0 1558.9 L1003.7 1558.9 L1008.3 1558.9 L1013.0 1558.9 L1017.6 1558.9 L1022.3 1558.9 L1026.9 1558.9 L1031.6 1558.9 L1036.2 1558.9 L1040.9 1558.9 L1045.5 1558.9 L1050.1 1558.9 L1054.8 1558.9 L1059.4 1558.9 L1064.1 1558.9 L1068.7 1558.9 L1073.4 1558.9 L1078.0 1558.9 L1082.7 1558.9 L1087.3 1561.5 L1092.0 1561.5 L1096.6 1561.5 L1101.3 1558.9 L1105.9 1558.9 L1110.6 1558.9 L1115.2 1558.9 L1119.8 1558.9 L1124.5 1558.9 L1129.1 1558.9 L1133.8 1558.9 L1138.4 1558.9 L1143.1 1558.9 L1147.7 1558.9 L1152.4 1558.9 L1157.0 1558.9 L1161.7 1558.9 L1166.3 1558.9 L1171.0 1558.9 L1175.6 1558.9 L1180.3 1558.9 L1184.9 1558.9 L1189.5 1558.9 L1194.2 1558.9 L1198.8 1558.9 L1203.5 1558.9 L1208.1 1558.9 L1212.8 1558.9 L1217.4 1558.9 L1222.1 1558.9 L1226.7 1561.5 L1231.4 1561.5 L1236.0 1561.5 L1240.7 1558.9 L1245.3 1558.9 L1250.0 1558.9 L1254.6 1558.9 L1259.2 1558.9 L1263.9 1558.9 L1268.5 1558.9 L1273.2 1558.9 L1277.8 1558.9 L1282.5 1558.9 L1287.1 1558.9 L1291.8 1558.9 L1296.4 1558.9 L1301.1 1558.9 L1305.7 1558.9 L1310.4 1558.9 L1315.0 1558.9 L1319.7 1558.9 L1324.3 1558.9 L1328.9 1558.9 L1333.6 1558.9 L1338.2 1558.9 L1342.9 1558.9 L1347.5 1558.9 L1352.2 1558.9 L1356.8 1558.9 L1361.5 1558.9 L1366.1 1561.5 L1370.8 1561.5 L1375.4 1561.5 L1380.1 1558.9 L1384.7 1558.9 L1389.4 1558.9 L1394.0 1558.9 L1398.6 1558.9 L1403.3 1558.9 L1407.9 1558.9 L1412.6 1558.9 L1417.2 1558.9 L1421.9 1558.9 L1426.5 1558.9 L1431.2 1558.9 L1435.8 1558.9 L1440.5 1558.9 L1445.1 1558.9 L1449.8 1558.9 L1454.4 1558.9 L1459.1 1558.9 L1463.7 1558.9 L1468.3 1558.9 L1473.0 1558.9 L1477.6 1558.9 L1482.3 1558.9 L1486.9 1558.9 L1491.6 1558.9 L1496.2 1558.9 L1500.9 1558.9 L1505.5 1561.5 L1510.2 1561.5 L1514.8 1561.5 L1519.5 1558.9 L1524.1 1558.9 L1528.8 1558.9 L1533.4 1558.9 L1538.0 1558.9 L1542.7 1558.9 L1547.3 1558.9 L1552.0 1558.9 L1556.6 1558.9 L1561.3 1558.9 L1565.9 1558.9 L1570.6 1558.9 L1575.2 1558.9 L1579.9 1558.9 L1584.5 1558.9 L1589.2 1558.9 L1593.8 1558.9 L1598.5 1558.9 L1603.1 1558.9 L1607.7 1558.9 L1612.4 1558.9 L1617.0 1558.9 L1621.7 1558.9 L1626.3 1558.9 L1631.0 1558.9 L1635.6 1558.9 L1640.3 1558.9 L1644.9 1561.5 L1649.6 1561.5 L1654.2 1561.5 L1658.9 1558.9 L1663.5 1558.9 L1668.2 1558.9 L1672.8 1558.9 L1677.4 1558.9 L1682.1 1558.9 L1686.7 1558.9 L1691.4 1558.9 L1696.0 1558.9 L1700.7 1558.9 L1705.3 1558.9 L1710.0 1558.9 L1714.6 1558.9 L1719.3 1558.9 L1723.9 1558.9 L1728.6 1558.9 L1733.2 1558.9 L1737.9 1558.9 L1742.5 1558.9 L1747.1 1558.9 L1751.8 1558.9 L1756.4 1558.9 L1761.1 1558.9 L1765.7 1558.9 L1770.4 1558.9 L1775.0 1558.9 L1779.7 1558.9 L1784.3 1561.5 L1789.0 1561.5 L1793.6 1561.5 L1798.3 1558.9 L1802.9 1558.9 L1807.6 1558.9 L1812.2 1558.9 L1816.8 1558.9 L1821.5 1558.9 L1826.1 1558.9 L1830.8 1558.9 L1835.4 1558.9 L1840.1 1558.9 L1844.7 1558.9 L1849.4 1558.9 L1854.0 1558.9 L1858.7 1558.9 L1863.3 1558.9 L1868.0 1558.9 L1872.6 1558.9" stroke="#5794f2"/><path d="M209.1 1450.5 L213.7 1450.5 L218.4 1450.5 L223.0 1450.5 L227.7 1450.5 L232.3 1450.5 L237.0 1449.3 L241.6 1449.3 L246.3 1449.3 L250.9 1450.5 L255.6 1450.5 L260.2 1450.5 L264.9 1450.5 L269.5 1450.5 L274.2 1450.5 L278.8 1451.7 L283.4 1451.7 L288.1 1451.7 L292.7 1450.5 L297.4 1450.5 L302.0 1450.5 L306.7 1450.5 L311.3 1450.5 L316.0 1450.5 L320.6 1449.3 L325.3 1449.3 L329.9 1449.3 L334.6 1450.5 L339.2 1450.5 L343.9 1450.5 L348.5 1450.5 L353.1 1450.5 L357.8 1450.5 L362.4 1451.7 L367.1 1451.7 L371.7 1451.7 L376.4 1450.5 L381.0 1450.5 L385.7 1450.5 L390.3 1450.5 L395.0 1450.5 L399.6 1450.5 L404.3 1449.3 L408.9 1449.3 L413.6 1449.3 L418.2 1450.5 L422.8 1450.5 L427.5 1450.5 L432.1 1450.5 L436.8 1450.5 L441.4 1450.5 L446.1 1451.7 L450.7 1451.7 L455.4 1451.7 L460.0 1450.5 L464.7 1450.5 L469.3 1450.5 L474.0 1450.5 L478.6 1450.5 L483.3 1450.5 L487.9 1450.5 L492.5 1450.5 L497.2 1450.5 L501.8 1450.5 L506.5 1450.5 L511.1 1450.5 L515.8 1450.5 L520.4 1450.5 L525.1 1450.5 L529.7 1450.5 L534.4 1450.5 L539.0 1450.5 L543.7 1453.5 L548.3 1453.5 L553.0 1453.5 L557.6 1456.5 L562.2 1456.5 L566.9 1456.5 L571.5 1459.6 L576.2 1459.6 L580.8 1459.6 L585.5 1462.6 L590.1 1462.6 L594.8 1462.6 L599.4 1465.6 L604.1 1465.6 L608.7 1465.6 L613.4 1468.6 L618.0 1468.6 L622.7 1468.6 L627.3 1471.6 L631.9 1471.6 L636.6 1471.6 L641.2 1474.7 L645.9 1474.7 L650.5 1474.7 L655.2 1477.7 L659.8 1477.7 L664.5 1477.7 L669.1 1480.7 L673.8 1480.7 L678.4 1480.7 L683.1 1480.7 L687.7 1480.7 L692.4 1480.7 L697.0 1480.7 L701.6 1480.7 L706.3 1480.7 L710.9 1480.7 L715.6 1480.7 L720.2 1480.7 L724.9 1480.7 L729.5 1480.7 L734.2 1480.7 L738.8 1480.7 L743.5 1480.7 L748.1 1480.7 L752.8 1480.7 L757.4 1480.7 L762.1 1480.7 L766.7 1480.7 L771.3 1480.7 L776.0 1480.7 L780.6 1480.7 L785.3 1480.7 L789.9 1480.7 L794.6 1480.7 L799.2 1480.7 L803.9 1480.7 L808.5 1480.7 L813.2 1480.7 L817.8 1480.7 L822.5 1480.7 L827.1 1480.7 L831.8 1480.7 L836.4 1481.9 L841.0 1481.9 L845.7 1481.9 L850.3 1480.7 L855.0 1480.7 L859.6 1480.7 L864.3 1481.9 L868.9 1481.9 L873.6 1481.9 L878.2 1480.7 L882.9 1480.7 L887.5 1480.7 L892.2 1481.9 L896.8 1481.9 L901.5 1481.9 L906.1 1480.7 L910.7 1480.7 L915.4 1480.7 L920.0 1480.7 L924.7 1480.7 L929.3 1480.7 L934.0 1480.7 L938.6 1480.7 L943.3 1480.7 L947.9 1480.7 L952.6 1480.7 L957.2 1480.7 L961.9 1480.7 L966.5 1480.7 L971.2 1480.7 L975.8 1480.7 L980.4 1480.7 L985.1 1480.7 L989.7 1480.7 L994.4 1480.7 L999.0 1480.7 L1003.7 1480.7 L1008.3 1480.7 L1013.0 1480.7 L1017.6 1480.7 L1022.3 1480.7 L1026.9 1480.7 L1031.6 1480.7 L1036.2 1480.7 L1040.9 1480.7 L1045.5 1480.7 L1050.1 1480.7 L1054.8 1480.7 L1059.4 1480.7 L1064.1 1480.7 L1068.7 1480.7 L1073.4 1480.7 L1078.0 1480.7 L1082.7 1480.7 L1087.3 1480.7 L1092.0 1480.7 L1096.6 1480.7 L1101.3 1480.7 L1105.9 1480.7 L1110.6 1480.7 L1115.2 1480.7 L1119.8 1480.7 L1124.5 1480.7 L1129.1 1479.5 L1133.8 1479.5 L1138.4 1479.5 L1143.1 1480.7 L1147.7 1480.7 L1152.4 1480.7 L1157.0 1479.5 L1161.7 1479.5 L1166.3 1479.5 L1171.0 1480.7 L1175.6 1480.7 L1180.3 1480.7 L1184.9 1479.5 L1189.5 1479.5 L1194.2 1479.5 L1198.8 1480.7 L1203.5 1480.7 L1208.1 1480.7 L1212.8 1480.7 L1217.4 1480.7 L1222.1 1480.7 L1226.7 1480.7 L1231.4 1480.7 L1236.0 1480.7 L1240.7 1480.7 L1245.3 1480.7 L1250.0 1480.7 L1254.6 1480.7 L1259.2 1480.7 L1263.9 1480.7 L1268.5 1480.7 L1273.2 1480.7 L1277.8 1480.7 L1282.5 1480.7 L1287.1 1480.7 L1291.8 1480.7 L1296.4 1480.7 L1301.1 1480.7 L1305.7 1480.7 L1310.4 1480.7 L1315.0 1480.7 L1319.7 1480.7 L1324.3 1480.7 L1328.9 1480.7 L1333.6 1480.7 L1338.2 1480.7 L1342.9 1480.7 L1347.5 1480.7 L1352.2 1480.7 L1356.8 1480.7 L1361.5 1480.7 L1366.1 1480.7 L1370.8 1480.7 L1375.4 1480.7 L1380.1 1480.7 L1384.7 1480.7 L1389.4 1480.7 L1394.0 1480.7 L1398.6 1480.7 L1403.3 1480.7 L1407.9 1479.5 L1412.6 1479.5 L1417.2 1479.5 L1421.9 1480.7 L1426.5 1480.7 L1431.2 1480.7 L1435.8 1480.7 L1440.5 1480.7 L1445.1 1480.7 L1449.8 1481.9 L1454.4 1481.9 L1459.1 1481.9 L1463.7 1480.7 L1468.3 1480.7 L1473.0 1480.7 L1477.6 1480.7 L1482.3 1480.7 L1486.9 1480.7 L1491.6 1479.5 L1496.2 1479.5 L1500.9 1479.5 L1505.5 1480.7 L1510.2 1480.7 L1514.8 1480.7 L1519.5 1480.7 L1524.1 1480.7 L1528.8 1480.7 L1533.4 1480.7 L1538.0 1480.7 L1542.7 1480.7 L1547.3 1480.7 L1552.0 1480.7 L1556.6 1480.7 L1561.3 1480.7 L1565.9 1480.7 L1570.6 1480.7 L1575.2 1480.7 L1579.9 1480.7 L1584.5 1480.7 L1589.2 1480.7 L1593.8 1480.7 L1598.5 1480.7 L1603.1 1480.7 L1607.7 1480.7 L1612.4 1480.7 L1617.0 1480.7 L1621.7 1480.7 L1626.3 1480.7 L1631.0 1480.7 L1635.6 1480.7 L1640.3 1480.7 L1644.9 1480.7 L1649.6 1480.7 L1654.2 1480.7 L1658.9 1480.7 L1663.5 1480.7 L1668.2 1480.7 L1672.8 1480.7 L1677.4 1480.7 L1682.1 1480.7 L1686.7 1480.7 L1691.4 1480.7 L1696.0 1480.7 L1700.7 1480.7 L1705.3 1480.7 L1710.0 1480.7 L1714.6 1480.7 L1719.3 1480.7 L1723.9 1480.7 L1728.6 1480.7 L1733.2 1480.7 L1737.9 1480.7 L1742.5 1480.7 L1747.1 1480.7 L1751.8 1480.7 L1756.4 1480.7 L1761.1 1480.7 L1765.7 1480.7 L1770.4 1479.5 L1775.0 1479.5 L1779.7 1479.5 L1784.3 1480.7 L1789.0 1480.7 L1793.6 1480.7 L1798.3 1479.5 L1802.9 1479.5 L1807.6 1479.5 L1812.2 1480.7 L1816.8 1480.7 L1821.5 1480.7 L1826.1 1480.7 L1830.8 1480.7 L1835.4 1480.7 L1840.1 1481.9 L1844.7 1481.9 L1849.4 1481.9 L1854.0 1480.7 L1858.7 1480.7 L1863.3 1480.7 L1868.0 1480.7 L1872.6 1480.7" stroke="#b877d9"/><path d="M209.1 1513.0 L213.7 1513.0 L218.4 1513.0 L223.0 1513.0 L227.7 1513.0 L232.3 1513.0 L237.0 1550.0 L241.6 1550.0 L246.3 1550.0 L250.9 1523.2 L255.6 1523.2 L260.2 1523.2 L264.9 1513.0 L269.5 1513.0 L274.2 1513.0 L278.8 1513.0 L283.4 1513.0 L288.1 1513.0 L292.7 1513.0 L297.4 1513.0 L302.0 1513.0 L306.7 1513.0 L311.3 1513.0 L316.0 1513.0 L320.6 1513.0 L325.3 1513.0 L329.9 1513.0 L334.6 1513.0 L339.2 1513.0 L343.9 1513.0 L348.5 1513.0 L353.1 1513.0 L357.8 1513.0 L362.4 1513.0 L367.1 1513.0 L371.7 1513.0 L376.4 1552.3 L381.0 1552.3 L385.7 1552.3 L390.3 1513.0 L395.0 1513.0 L399.6 1513.0 L404.3 1513.0 L408.9 1513.0 L413.6 1513.0 L418.2 1513.0 L422.8 1513.0 L427.5 1513.0 L432.1 1513.0 L436.8 1513.0 L441.4 1513.0 L446.1 1513.0 L450.7 1513.0 L455.4 1513.0 L460.0 1513.0 L464.7 1513.0 L469.3 1513.0 L474.0 1513.0 L478.6 1513.0 L483.3 1513.0 L487.9 1513.0 L492.5 1513.0 L497.2 1513.0 L501.8 1513.0 L506.5 1513.0 L511.1 1513.0 L515.8 1560.5 L520.4 1560.5 L525.1 1560.5 L529.7 1517.5 L534.4 1517.5 L539.0 1517.5 L543.7 1513.0 L548.3 1513.0 L553.0 1513.0 L557.6 1513.0 L562.2 1513.0 L566.9 1513.0 L571.5 1513.0 L576.2 1513.0 L580.8 1513.0 L585.5 1513.0 L590.1 1513.0 L594.8 1513.0 L599.4 1513.0 L604.1 1513.0 L608.7 1513.0 L613.4 1513.0 L618.0 1513.0 L622.7 1513.0 L627.3 1513.0 L631.9 1513.0 L636.6 1513.0 L641.2 1513.0 L645.9 1513.0 L650.5 1513.0 L655.2 1557.6 L659.8 1557.6 L664.5 1557.6 L669.1 1513.0 L673.8 1513.0 L678.4 1513.0 L683.1 1513.0 L687.7 1513.0 L692.4 1513.0 L697.0 1513.0 L701.6 1513.0 L706.3 1513.0 L710.9 1513.0 L715.6 1513.0 L720.2 1513.0 L724.9 1513.0 L729.5 1513.0 L734.2 1513.0 L738.8 1513.0 L743.5 1513.0 L748.1 1513.0 L752.8 1513.0 L757.4 1513.0 L762.1 1513.0 L766.7 1513.0 L771.3 1513.0 L776.0 1513.0 L780.6 1513.0 L785.3 1513.0 L789.9 1513.0 L794.6 1561.0 L799.2 1561.0 L803.9 1561.0 L808.5 1513.0 L813.2 1513.0 L817.8 1513.0 L822.5 1513.0 L827.1 1513.0 L831.8 1513.0 L836.4 1513.0 L841.0 1513.0 L845.7 1513.0 L850.3 1513.0 L855.0 1513.0 L859.6 1513.0 L864.3 1513.0 L868.9 1513.0 L873.6 1513.0 L878.2 1513.0 L882.9 1513.0 L887.5 1513.0 L892.2 1513.0 L896.8 1513.0 L901.5 1513.0 L906.1 1513.0 L910.7 1513.0 L915.4 1513.0 L920.0 1513.0 L924.7 1513.0 L929.3 1513.0 L934.0 1561.0 L938.6 1561.0 L943.3 1561.0 L947.9 1513.0 L952.6 1513.0 L957.2 1513.0 L961.9 1513.0 L966.5 1513.0 L971.2 1513.0 L975.8 1513.0 L980.4 1513.0 L985.1 1513.0 L989.7 1513.0 L994.4 1513.0 L999.0 1513.0 L1003.7 1513.0 L1008.3 1513.0 L1013.0 1513.0 L1017.6 1513.0 L1022.3 1513.0 L1026.9 1513.0 L1031.6 1513.0 L1036.2 1513.0 L1040.9 1513.0 L1045.5 1513.0 L1050.1 1513.0 L1054.8 1513.0 L1059.4 1513.0 L1064.1 1513.0 L1068.7 1513.0 L1073.4 1561.0 L1078.0 1561.0 L1082.7 1561.0 L1087.3 1513.0 L1092.0 1513.0 L1096.6 1513.0 L1101.3 1513.0 L1105.9 1513.0 L1110.6 1513.0 L1115.2 1513.0 L1119.8 1513.0 L1124.5 1513.0 L1129.1 1513.0 L1133.8 1513.0 L1138.4 1513.0 L1143.1 1513.0 L1147.7 1513.0 L1152.4 1513.0 L1157.0 1513.0 L1161.7 1513.0 L1166.3 1513.0 L1171.0 1513.0 L1175.6 1513.0 L1180.3 1513.0 L1184.9 1513.0 L1189.5 1513.0 L1194.2 1513.0 L1198.8 1513.0 L1203.5 1513.0 L1208.1 1513.0 L1212.8 1561.0 L1217.4 1561.0 L1222.1 1561.0 L1226.7 1513.0 L1231.4 1513.0 L1236.0 1513.0 L1240.7 1513.0 L1245.3 1513.0 L1250.0 1513.0 L1254.6 1513.0 L1259.2 1513.0 L1263.9 1513.0 L1268.5 1513.0 L1273.2 1513.0 L1277.8 1513.0 L1282.5 1513.0 L1287.1 1513.0 L1291.8 1513.0 L1296.4 1513.0 L1301.1 1513.0 L1305.7 1513.0 L1310.4 1513.0 L1315.0 1513.0 L1319.7 1513.0 L1324.3 1513.0 L1328.9 1513.0 L1333.6 1513.0 L1338.2 1513.0 L1342.9 1513.0 L1347.5 1513.0 L1352.2 1561.0 L1356.8 1561.0 L1361.5 1561.0 L1366.1 1513.0 L1370.8 1513.0 L1375.4 1513.0 L1380.1 1513.0 L1384.7 1513.0 L1389.4 1513.0 L1394.0 1513.0 L1398.6 1513.0 L1403.3 1513.0 L1407.9 1513.0 L1412.6 1513.0 L1417.2 1513.0 L1421.9 1513.0 L1426.5 1513.0 L1431.2 1513.0 L1435.8 1513.0 L1440.5 1513.0 L1445.1 1513.0 L1449.8 1513.0 L1454.4 1513.0 L1459.1 1513.0 L1463.7 1513.0 L1468.3 1513.0 L1473.0 1513.0 L1477.6 1513.0 L1482.3 1513.0 L1486.9 1513.0 L1491.6 1561.0 L1496.2 1561.0 L1500.9 1561.0 L1505.5 1513.0 L1510.2 1513.0 L1514.8 1513.0 L1519.5 1513.0 L1524.1 1513.0 L1528.8 1513.0 L1533.4 1513.0 L1538.0 1513.0 L1542.7 1513.0 L1547.3 1513.0 L1552.0 1513.0 L1556.6 1513.0 L1561.3 1513.0 L1565.9 1513.0 L1570.6 1513.0 L1575.2 1513.0 L1579.9 1513.0 L1584.5 1513.0 L1589.2 1513.0 L1593.8 1513.0 L1598.5 1513.0 L1603.1 1513.0 L1607.7 1513.0 L1612.4 1513.0 L1617.0 1513.0 L1621.7 1513.0 L1626.3 1513.0 L1631.0 1561.0 L1635.6 1561.0 L1640.3 1561.0 L1644.9 1541.1 L1649.6 1541.1 L1654.2 1541.1 L1658.9 1541.1 L1663.5 1541.1 L1668.2 1541.1 L1672.8 1541.1 L1677.4 1541.1 L1682.1 1541.1 L1686.7 1541.1 L1691.4 1541.1 L1696.0 1541.1 L1700.7 1541.1 L1705.3 1541.1 L1710.0 1541.1 L1714.6 1541.1 L1719.3 1541.1 L1723.9 1541.1 L1728.6 1541.1 L1733.2 1541.1 L1737.9 1541.1 L1742.5 1541.1 L1747.1 1541.1 L1751.8 1541.1 L1756.4 1541.1 L1761.1 1541.1 L1765.7 1541.1 L1770.4 1561.0 L1775.0 1561.0 L1779.7 1561.0 L1784.3 1552.3 L1789.0 1552.3 L1793.6 1552.3 L1798.3 1513.0 L1802.9 1513.0 L1807.6 1513.0 L1812.2 1513.0 L1816.8 1513.0 L1821.5 1513.0 L1826.1 1513.0 L1830.8 1513.0 L1835.4 1513.0 L1840.1 1513.0 L1844.7 1513.0 L1849.4 1513.0 L1854.0 1513.0 L1858.7 1513.0 L1863.3 1513.0 L1868.0 1513.0 L1872.6 1513.0" stroke="#7862a6"/><path d="M209.1 1561.9 L1874.5 1561.9" stroke="#37872d"/></g></svg><div class="ytick"><span class="t" style="left:119.9px;top:1548.9px;font-size:24.5px;line-height:24.5px;color:#ccccdc;transform:scaleX(1.0781);-webkit-text-stroke:0.29px #ccccdc;">0</span> <span class="t" style="left:141.1px;top:1548.8px;font-size:25px;line-height:25px;color:#ccccdc;transform:scaleX(1.0588);-webkit-text-stroke:0.3px #ccccdc;">req/s</span></div><div class="ytick"><span class="t" style="left:107.6px;top:1475.7px;font-size:24.5px;line-height:24.5px;color:#ccccdc;transform:scaleX(0.9870);-webkit-text-stroke:0.29px #ccccdc;">10</span> <span class="t" style="left:141.1px;top:1475.6px;font-size:25px;line-height:25px;color:#ccccdc;transform:scaleX(1.0588);-webkit-text-stroke:0.3px #ccccdc;">req/s</span></div><div class="ytick"><span class="t" style="left:104.5px;top:1402.5px;font-size:24.5px;line-height:24.5px;color:#ccccdc;transform:scaleX(1.1062);-webkit-text-stroke:0.29px #ccccdc;">20</span> <span class="t" style="left:141.1px;top:1402.4px;font-size:25px;line-height:25px;color:#ccccdc;transform:scaleX(1.0588);-webkit-text-stroke:0.3px #ccccdc;">req/s</span></div><div class="ytick"><span class="t" style="left:104.9px;top:1329.3px;font-size:24.5px;line-height:24.5px;color:#ccccdc;transform:scaleX(1.0902);-webkit-text-stroke:0.29px #ccccdc;">30</span> <span class="t" style="left:141.1px;top:1329.2px;font-size:25px;line-height:25px;color:#ccccdc;transform:scaleX(1.0588);-webkit-text-stroke:0.3px #ccccdc;">req/s</span></div><div class="ytick"><span class="t" style="left:105.3px;top:1256.1px;font-size:24.5px;line-height:24.5px;color:#ccccdc;transform:scaleX(1.0748);-webkit-text-stroke:0.29px #ccccdc;">40</span> <span class="t" style="left:141.1px;top:1256.0px;font-size:25px;line-height:25px;color:#ccccdc;transform:scaleX(1.0588);-webkit-text-stroke:0.3px #ccccdc;">req/s</span></div><div class="ytick"><span class="t" style="left:104.8px;top:1182.9px;font-size:24.5px;line-height:24.5px;color:#ccccdc;transform:scaleX(1.0955);-webkit-text-stroke:0.29px #ccccdc;">50</span> <span class="t" style="left:141.1px;top:1182.8px;font-size:25px;line-height:25px;color:#ccccdc;transform:scaleX(1.0588);-webkit-text-stroke:0.3px #ccccdc;">req/s</span></div><div class="ytick"><span class="t" style="left:104.5px;top:1109.7px;font-size:24.5px;line-height:24.5px;color:#ccccdc;transform:scaleX(1.1062);-webkit-text-stroke:0.29px #ccccdc;">60</span> <span class="t" style="left:141.1px;top:1109.6px;font-size:25px;line-height:25px;color:#ccccdc;transform:scaleX(1.0588);-webkit-text-stroke:0.3px #ccccdc;">req/s</span></div><div class="ytick"><span class="t" style="left:104.5px;top:1036.5px;font-size:24.5px;line-height:24.5px;color:#ccccdc;transform:scaleX(1.1062);-webkit-text-stroke:0.29px #ccccdc;">70</span> <span class="t" style="left:141.1px;top:1036.5px;font-size:25px;line-height:25px;color:#ccccdc;transform:scaleX(1.0588);-webkit-text-stroke:0.3px #ccccdc;">req/s</span></div><div class="ytick"><span class="t" style="left:104.8px;top:963.3px;font-size:24.5px;line-height:24.5px;color:#ccccdc;transform:scaleX(1.0955);-webkit-text-stroke:0.29px #ccccdc;">80</span> <span class="t" style="left:141.1px;top:963.2px;font-size:25px;line-height:25px;color:#ccccdc;transform:scaleX(1.0588);-webkit-text-stroke:0.3px #ccccdc;">req/s</span></div><span class="t" style="left:212.1px;top:1582.9px;font-size:24px;line-height:24px;color:#ccccdc;transform:scaleX(1.0491);-webkit-text-stroke:0.29px #ccccdc;">16:00</span><span class="t" style="left:351.5px;top:1582.9px;font-size:24px;line-height:24px;color:#ccccdc;transform:scaleX(1.0513);-webkit-text-stroke:0.29px #ccccdc;">16:05</span><span class="t" style="left:490.9px;top:1582.9px;font-size:24px;line-height:24px;color:#ccccdc;transform:scaleX(1.0491);-webkit-text-stroke:0.29px #ccccdc;">16:10</span><span class="t" style="left:630.3px;top:1582.9px;font-size:24px;line-height:24px;color:#ccccdc;transform:scaleX(1.0513);-webkit-text-stroke:0.29px #ccccdc;">16:15</span><span class="t" style="left:769.7px;top:1582.9px;font-size:24px;line-height:24px;color:#ccccdc;transform:scaleX(1.0491);-webkit-text-stroke:0.29px #ccccdc;">16:20</span><span class="t" style="left:909.1px;top:1582.9px;font-size:24px;line-height:24px;color:#ccccdc;transform:scaleX(1.0513);-webkit-text-stroke:0.29px #ccccdc;">16:25</span><span class="t" style="left:1048.5px;top:1582.9px;font-size:24px;line-height:24px;color:#ccccdc;transform:scaleX(1.0491);-webkit-text-stroke:0.29px #ccccdc;">16:30</span><span class="t" style="left:1187.9px;top:1582.9px;font-size:24px;line-height:24px;color:#ccccdc;transform:scaleX(1.0513);-webkit-text-stroke:0.29px #ccccdc;">16:35</span><span class="t" style="left:1327.3px;top:1582.9px;font-size:24px;line-height:24px;color:#ccccdc;transform:scaleX(1.0491);-webkit-text-stroke:0.29px #ccccdc;">16:40</span><span class="t" style="left:1466.7px;top:1582.9px;font-size:24px;line-height:24px;color:#ccccdc;transform:scaleX(1.0513);-webkit-text-stroke:0.29px #ccccdc;">16:45</span><span class="t" style="left:1606.1px;top:1582.9px;font-size:24px;line-height:24px;color:#ccccdc;transform:scaleX(1.0491);-webkit-text-stroke:0.29px #ccccdc;">16:50</span><span class="t" style="left:1745.5px;top:1582.9px;font-size:24px;line-height:24px;color:#ccccdc;transform:scaleX(1.0513);-webkit-text-stroke:0.29px #ccccdc;">16:55</span><div class="abs" style="left:50.4px;top:1268.5px;width:0;height:0;transform:rotate(-90deg)"><span class="t" style="left:-126.9px;top:-12.6px;font-size:25px;line-height:25px;color:#ccccdc;transform:scaleX(1.0182);-webkit-text-stroke:0.3px #ccccdc;">Messages per Second</span></div><div class="legend"><span class="t" style="left:1956.7px;top:969.6px;font-size:24px;line-height:24px;color:#6e9fff;transform:scaleX(1.0757);-webkit-text-stroke:0.86px #6e9fff;">Name</span><span class="t" style="left:2158.3px;top:969.6px;font-size:24px;line-height:24px;color:#6e9fff;transform:scaleX(1.1189);-webkit-text-stroke:0.86px #6e9fff;">Last *</span><div class="abs" style="left:1898px;top:1003.9px;width:360px;height:2px;background:#33353b"></div><div class="abs" style="left:1914px;top:1024.1px;width:28px;height:8px;border-radius:4px;background:#5794f2"></div><span class="t" style="left:1957.6px;top:1014.3px;font-size:25px;line-height:25px;color:#ccccdc;transform:scaleX(1.0845);-webkit-text-stroke:0.3px #ccccdc;">aldi</span><div class="abs" style="left:2100px;top:1006.9px;width:158px;height:44px;overflow:hidden"><div class="abs" style="left:-2100px;top:-1006.9px;width:0;height:0"><span class="t" style="left:2147.2px;top:1014.4px;font-size:24.5px;line-height:24.5px;color:#ccccdc;transform:scaleX(1.0547);-webkit-text-stroke:0.29px #ccccdc;">2.87</span> <span class="t" style="left:2204.6px;top:1014.3px;font-size:25px;line-height:25px;color:#ccccdc;transform:scaleX(1.0871);-webkit-text-stroke:0.3px #ccccdc;">req/s</span></div></div><div class="abs" style="left:1898px;top:1050.0px;width:360px;height:2px;background:#33353b"></div><div class="abs" style="left:1914px;top:1070.2px;width:28px;height:8px;border-radius:4px;background:#f2495c"></div><span class="t" style="left:1957.6px;top:1060.4px;font-size:25px;line-height:25px;color:#ccccdc;transform:scaleX(1.0751);-webkit-text-stroke:0.3px #ccccdc;">coop</span><div class="abs" style="left:2100px;top:1053.0px;width:158px;height:44px;overflow:hidden"><div class="abs" style="left:-2100px;top:-1053.0px;width:0;height:0"><span class="t" style="left:2146.2px;top:1060.4px;font-size:24.5px;line-height:24.5px;color:#ccccdc;transform:scaleX(1.0720);-webkit-text-stroke:0.29px #ccccdc;">43.5</span> <span class="t" style="left:2204.6px;top:1060.4px;font-size:25px;line-height:25px;color:#ccccdc;transform:scaleX(1.0871);-webkit-text-stroke:0.3px #ccccdc;">req/s</span></div></div><div class="abs" style="left:1898px;top:1096.0px;width:360px;height:2px;background:#33353b"></div><div class="abs" style="left:1914px;top:1116.2px;width:28px;height:8px;border-radius:4px;background:#8ab8ff"></div><span class="t" style="left:1957.0px;top:1106.5px;font-size:25px;line-height:25px;color:#ccccdc;transform:scaleX(1.0300);-webkit-text-stroke:0.3px #ccccdc;">loweusa</span><div class="abs" style="left:2100px;top:1099.0px;width:158px;height:44px;overflow:hidden"><div class="abs" style="left:-2100px;top:-1099.0px;width:0;height:0"><span class="t" style="left:2127.0px;top:1106.5px;font-size:24.5px;line-height:24.5px;color:#ccccdc;transform:scaleX(0.9870);-webkit-text-stroke:0.29px #ccccdc;">0.0111</span> <span class="t" style="left:2204.6px;top:1106.5px;font-size:25px;line-height:25px;color:#ccccdc;transform:scaleX(1.0871);-webkit-text-stroke:0.3px #ccccdc;">req/s</span></div></div><div class="abs" style="left:1898px;top:1142.1px;width:360px;height:2px;background:#33353b"></div><div class="abs" style="left:1914px;top:1162.3px;width:28px;height:8px;border-radius:4px;background:#ff780a"></div><span class="t" style="left:1956.9px;top:1152.6px;font-size:25px;line-height:25px;color:#ccccdc;transform:scaleX(1.0717);-webkit-text-stroke:0.3px #ccccdc;">mcc</span><div class="abs" style="left:2100px;top:1145.1px;width:158px;height:44px;overflow:hidden"><div class="abs" style="left:-2100px;top:-1145.1px;width:0;height:0"><span class="t" style="left:2182.6px;top:1152.6px;font-size:24.5px;line-height:24.5px;color:#ccccdc;transform:scaleX(1.0696);-webkit-text-stroke:0.29px #ccccdc;">0</span> <span class="t" style="left:2204.6px;top:1152.6px;font-size:25px;line-height:25px;color:#ccccdc;transform:scaleX(1.0871);-webkit-text-stroke:0.3px #ccccdc;">req/s</span></div></div><div class="abs" style="left:1898px;top:1188.2px;width:360px;height:2px;background:#33353b"></div><div class="abs" style="left:1914px;top:1208.4px;width:28px;height:8px;border-radius:4px;background:#f2495c"></div><span class="t" style="left:1957.0px;top:1198.6px;font-size:25px;line-height:25px;color:#ccccdc;transform:scaleX(1.0441);-webkit-text-stroke:0.3px #ccccdc;">mrmuc</span><div class="abs" style="left:2100px;top:1191.2px;width:158px;height:44px;overflow:hidden"><div class="abs" style="left:-2100px;top:-1191.2px;width:0;height:0"><span class="t" style="left:2182.4px;top:1198.6px;font-size:24.5px;line-height:24.5px;color:#ccccdc;transform:scaleX(1.0865);-webkit-text-stroke:0.29px #ccccdc;">0</span> <span class="t" style="left:2204.6px;top:1198.6px;font-size:25px;line-height:25px;color:#ccccdc;transform:scaleX(1.0871);-webkit-text-stroke:0.3px #ccccdc;">req/s</span></div></div><div class="abs" style="left:1898px;top:1234.2px;width:360px;height:2px;background:#33353b"></div><div class="abs" style="left:1914px;top:1254.5px;width:28px;height:8px;border-radius:4px;background:#5794f2"></div><span class="t" style="left:1957.6px;top:1244.7px;font-size:25px;line-height:25px;color:#ccccdc;transform:scaleX(1.0539);-webkit-text-stroke:0.3px #ccccdc;">odeon</span><div class="abs" style="left:2100px;top:1237.2px;width:158px;height:44px;overflow:hidden"><div class="abs" style="left:-2100px;top:-1237.2px;width:0;height:0"><span class="t" style="left:2134.6px;top:1244.7px;font-size:24.5px;line-height:24.5px;color:#ccccdc;transform:scaleX(1.0251);-webkit-text-stroke:0.29px #ccccdc;">0.381</span> <span class="t" style="left:2204.6px;top:1244.7px;font-size:25px;line-height:25px;color:#ccccdc;transform:scaleX(1.0871);-webkit-text-stroke:0.3px #ccccdc;">req/s</span></div></div><div class="abs" style="left:1898px;top:1280.3px;width:360px;height:2px;background:#33353b"></div><div class="abs" style="left:1914px;top:1300.5px;width:28px;height:8px;border-radius:4px;background:#b877d9"></div><span class="t" style="left:1957.1px;top:1290.8px;font-size:25px;line-height:25px;color:#ccccdc;transform:scaleX(1.0540);-webkit-text-stroke:0.3px #ccccdc;">poundland</span><div class="abs" style="left:2100px;top:1283.3px;width:158px;height:44px;overflow:hidden"><div class="abs" style="left:-2100px;top:-1283.3px;width:0;height:0"><span class="t" style="left:2153.5px;top:1290.8px;font-size:24.5px;line-height:24.5px;color:#ccccdc;transform:scaleX(0.9506);-webkit-text-stroke:0.29px #ccccdc;">11.0</span> <span class="t" style="left:2204.6px;top:1290.8px;font-size:25px;line-height:25px;color:#ccccdc;transform:scaleX(1.0871);-webkit-text-stroke:0.3px #ccccdc;">req/s</span></div></div><div class="abs" style="left:1898px;top:1326.4px;width:360px;height:2px;background:#33353b"></div><div class="abs" style="left:1914px;top:1346.6px;width:28px;height:8px;border-radius:4px;background:#705da0"></div><span class="t" style="left:1958.0px;top:1336.8px;font-size:25px;line-height:25px;color:#ccccdc;transform:scaleX(1.0433);-webkit-text-stroke:0.3px #ccccdc;">sainsburys</span><div class="abs" style="left:2100px;top:1329.4px;width:158px;height:44px;overflow:hidden"><div class="abs" style="left:-2100px;top:-1329.4px;width:0;height:0"><span class="t" style="left:2147.4px;top:1336.8px;font-size:24.5px;line-height:24.5px;color:#ccccdc;transform:scaleX(1.0503);-webkit-text-stroke:0.29px #ccccdc;">6.67</span> <span class="t" style="left:2204.6px;top:1336.8px;font-size:25px;line-height:25px;color:#ccccdc;transform:scaleX(1.0871);-webkit-text-stroke:0.3px #ccccdc;">req/s</span></div></div><div class="abs" style="left:1898px;top:1372.5px;width:360px;height:2px;background:#33353b"></div><div class="abs" style="left:1914px;top:1392.7px;width:28px;height:8px;border-radius:4px;background:#37872d"></div><span class="t" style="left:1957.6px;top:1382.9px;font-size:25px;line-height:25px;color:#ccccdc;transform:scaleX(1.0316);-webkit-text-stroke:0.3px #ccccdc;">zerozone</span><div class="abs" style="left:2100px;top:1375.5px;width:158px;height:44px;overflow:hidden"><div class="abs" style="left:-2100px;top:-1375.5px;width:0;height:0"><span class="t" style="left:2114.3px;top:1382.9px;font-size:24.5px;line-height:24.5px;color:#ccccdc;transform:scaleX(1.1087);-webkit-text-stroke:0.29px #ccccdc;">0.0333</span> <span class="t" style="left:2204.6px;top:1382.9px;font-size:25px;line-height:25px;color:#ccccdc;transform:scaleX(1.0871);-webkit-text-stroke:0.3px #ccccdc;">req/s</span></div></div><div class="abs" style="left:1898px;top:1418.5px;width:360px;height:2px;background:#33353b"></div></div><section class="panel" style="left:2292.7px;top:878px;width:1119.3px;height:744px" aria-label="Tenant Activity Championship"></section><svg class="emoji" role="img" aria-label="trophy" style="left:2311.5px;top:893.6px" width="34.0" height="36.0" viewBox="0 0 34 36"><path d="M8.4 3.4 H3.4 Q0.9 3.4 1.2 6 Q2 11.4 9.6 14.6" fill="none" stroke="#7a3f25" stroke-width="3.4"/><path d="M26.4 3.4 H31.2 Q33.6 3.4 33.3 6 Q32.4 11.4 25 14.6" fill="none" stroke="#7a3f25" stroke-width="3.4"/><path d="M8.4 3.4 H3.4 Q0.9 3.4 1.2 6 Q2 11.4 9.6 14.6" fill="none" stroke="#efc31a" stroke-width="2"/><path d="M26.4 3.4 H31.2 Q33.6 3.4 33.3 6 Q32.4 11.4 25 14.6" fill="none" stroke="#efc31a" stroke-width="2"/><path d="M7.4 0.2 H27.4 V9 Q27 17 19.6 19.2 V26 L23.4 28.2 H11.4 L15.2 26 V19.2 Q7.8 17 7.4 9 Z" fill="#7a3f25"/><path d="M8.4 1 H26.4 V9 Q26 16.2 19 18.4 H15.8 Q8.8 16.2 8.4 9 Z" fill="#f2c81b"/><path d="M12.2 1 H14.6 V15 Q12.4 12.8 12.2 9 Z" fill="#c99b1c"/><path d="M16.6 1 H20.6 Q20.8 12 19.2 18 H16.6 Z" fill="#b1901f"/><path d="M20.4 1.6 V13.4" stroke="#f07a12" stroke-width="0.8" stroke-dasharray="1.5 1.1"/><path d="M22 2 V9" stroke="#f07a12" stroke-width="0.7" stroke-dasharray="1 1.4"/><path d="M15.9 18.4 H18.9 V26 L22 27.6 H12.8 L15.9 26 Z" fill="#c9a11c"/><path d="M17.2 19 V27" stroke="#8f6a1d" stroke-width="0.9"/><path d="M9.4 27.6 H25.6 V33.4 H28.4 V36 H6.4 V33.4 H9.4 Z" fill="#8a4a2e"/><rect x="11" y="29.6" width="13.2" height="3.7" fill="#f2c81b"/><path d="M13.6 31.4 L16 32.4" stroke="#a8d8d0" stroke-width="0.9"/><rect x="19.6" y="31.4" width="1" height="1.4" fill="#f07a12"/></svg><span class="t" style="left:2357.4px;top:898.1px;font-size:28px;line-height:28px;color:#ccccdc;transform:scaleX(1.1092);-webkit-text-stroke:1.01px #ccccdc;">Tenant Activity Championship</span><svg class="ico-info" style="left:2800.1px;top:897.9px" width="28" height="28" viewBox="0 0 28 28"><circle cx="14" cy="14" r="11.9" fill="none" stroke="#8e8fa0" stroke-width="2.4"/><rect x="12.8" y="12.4" width="2.5" height="7.4" rx="1.2" fill="#8e8fa0"/><circle cx="14" cy="9" r="1.5" fill="#8e8fa0"/></svg><div class="abs" style="left:2294.7px;top:940px;width:1115.3px;height:663.5px;overflow:hidden"><div class="abs" style="left:-2294.7px;top:-940px;width:0;height:0"><span class="t" style="left:2309.7px;top:972.3px;font-size:46px;line-height:46px;color:#ccccdc;transform:scaleX(1.0611);-webkit-text-stroke:0.55px #ccccdc;">aldi</span><div class="abs" style="left:2310.4px;top:1027.8px;width:820.3px;height:82px;border-radius:4px;background:#22252b"></div><div class="abs" style="left:2310.4px;top:1027.8px;width:32.7px;height:82px;border-radius:4px;background:#73bf69"></div><div class="barval"><span class="t" style="left:3211.3px;top:1045.9px;font-size:45px;line-height:45px;color:#73bf69;transform:scaleX(1.0452);-webkit-text-stroke:0.54px #73bf69;">2.9</span> <span class="t" style="left:3286.9px;top:1056.0px;font-size:33px;line-height:33px;color:#73bf69;transform:scaleX(1.1818);-webkit-text-stroke:0.4px #73bf69;">req/s</span></div><span class="t" style="left:2309.7px;top:1142.0px;font-size:46px;line-height:46px;color:#ccccdc;transform:scaleX(1.0785);-webkit-text-stroke:0.55px #ccccdc;">coop</span><div class="abs" style="left:2310.4px;top:1197.5px;width:820.3px;height:82px;border-radius:4px;background:#22252b"></div><div class="abs" style="left:2310.4px;top:1197.5px;width:499.7px;height:82px;border-radius:4px;background:#f2cc0c"></div><div class="barval"><span class="t" style="left:3184.0px;top:1215.6px;font-size:45px;line-height:45px;color:#f2cc0c;transform:scaleX(1.0557);-webkit-text-stroke:0.54px #f2cc0c;">43.5</span> <span class="t" style="left:3286.9px;top:1225.7px;font-size:33px;line-height:33px;color:#f2cc0c;transform:scaleX(1.1818);-webkit-text-stroke:0.4px #f2cc0c;">req/s</span></div><span class="t" style="left:2308.6px;top:1311.7px;font-size:46px;line-height:46px;color:#ccccdc;transform:scaleX(1.0367);-webkit-text-stroke:0.55px #ccccdc;">loweusa</span><div class="abs" style="left:2310.4px;top:1367.2px;width:820.3px;height:82px;border-radius:4px;background:#22252b"></div><div class="abs" style="left:2310.4px;top:1367.2px;width:2.2px;height:82px;border-radius:4px;background:#8ab8ff"></div><div class="barval"><span class="t" style="left:3211.5px;top:1385.3px;font-size:45px;line-height:45px;color:#8ab8ff;transform:scaleX(1.0338);-webkit-text-stroke:0.54px #8ab8ff;">0.0</span> <span class="t" style="left:3286.9px;top:1395.4px;font-size:33px;line-height:33px;color:#8ab8ff;transform:scaleX(1.1818);-webkit-text-stroke:0.4px #8ab8ff;">req/s</span></div><span class="t" style="left:2308.5px;top:1481.4px;font-size:46px;line-height:46px;color:#ccccdc;transform:scaleX(1.0707);-webkit-text-stroke:0.55px #ccccdc;">mcc</span><div class="abs" style="left:2310.4px;top:1536.9px;width:820.3px;height:82px;border-radius:4px;background:#22252b"></div><div class="abs" style="left:2310.4px;top:1536.9px;width:2.2px;height:82px;border-radius:4px;background:#ff780a"></div><div class="barval"><span class="t" style="left:3211.5px;top:1555.0px;font-size:45px;line-height:45px;color:#ff780a;transform:scaleX(1.0338);-webkit-text-stroke:0.54px #ff780a;">0.0</span> <span class="t" style="left:3286.9px;top:1565.1px;font-size:33px;line-height:33px;color:#ff780a;transform:scaleX(1.1818);-webkit-text-stroke:0.4px #ff780a;">req/s</span></div></div></div><div class="abs" style="left:0;top:0;width:3444px;height:27px;background:linear-gradient(to bottom,rgba(0,0,0,0.7) 0,rgba(0,0,0,0.58) 3px,rgba(0,0,0,0.4) 5.5px,rgba(0,0,0,0.2) 14px,rgba(0,0,0,0) 27px)"></div><div class="abs" style="left:0;top:1612px;width:3444px;height:22px;background:linear-gradient(to bottom,rgba(0,0,0,0),rgba(0,0,0,0.22))"></div><div class="abs" style="left:-40px;top:-20px;width:3484px;height:1670px;border:2.4px solid #3d4047;border-radius:0 0 34px 0;pointer-events:none"></div></div></body></html>
